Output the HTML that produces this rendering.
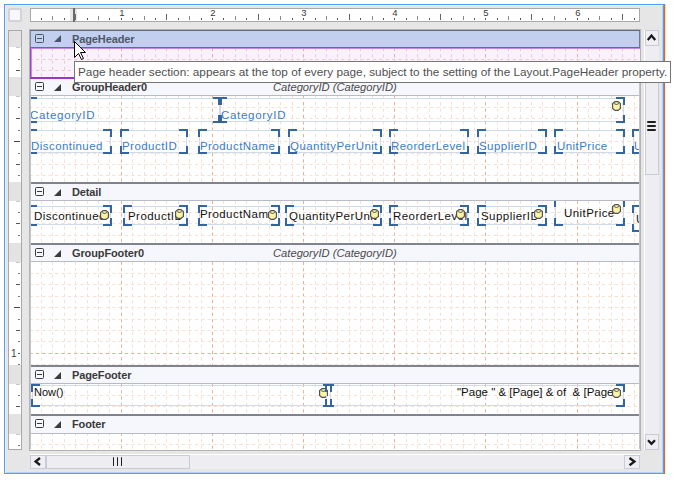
<!DOCTYPE html><html><head><meta charset="utf-8"><style>html,body{margin:0;padding:0;width:673px;height:480px;overflow:hidden;background:#fff;}body{position:relative;font-family:'Liberation Sans', sans-serif;}</style></head><body>
<div style="position:absolute;left:4px;top:4px;width:658px;height:468px;border:1px solid #569ff0;background:#e6e6e6;box-shadow:inset 1px 1px 0 #eeebe8, inset -1px -1px 0 #b4d2f4;"></div>
<div style="position:absolute;left:664px;top:4px;width:1px;height:470px;background:#ff5c0a;"></div>
<div style="position:absolute;left:665px;top:4px;width:1px;height:82px;background:linear-gradient(#ffdcc8,#ffe6d8 60%,#fff);"></div>
<div style="position:absolute;left:8px;top:8px;width:10px;height:10px;border:2px solid #d2d2d7;border-radius:2px;background:#f7f8fd;"></div>
<div style="position:absolute;left:30px;top:8px;width:608px;height:12px;border:1px solid #a9a9a9;background:#fff;"></div>
<div style="position:absolute;left:41px;top:18px;width:1px;height:2px;background:#555;"></div>
<div style="position:absolute;left:52px;top:16px;width:1px;height:4px;background:#8a8a8a;"></div>
<div style="position:absolute;left:64px;top:18px;width:1px;height:2px;background:#555;"></div>
<div style="position:absolute;left:75px;top:14px;width:1px;height:6px;background:#666;"></div>
<div style="position:absolute;left:87px;top:18px;width:1px;height:2px;background:#555;"></div>
<div style="position:absolute;left:98px;top:16px;width:1px;height:4px;background:#8a8a8a;"></div>
<div style="position:absolute;left:109px;top:18px;width:1px;height:2px;background:#555;"></div>
<div style="position:absolute;left:118px;top:8px;font:9.5px 'Liberation Sans', sans-serif;color:#3a3a3a;line-height:1;white-space:pre;width:8px;text-align:center;">1</div>
<div style="position:absolute;left:121px;top:18px;width:1px;height:2px;background:#555;"></div>
<div style="position:absolute;left:132px;top:18px;width:1px;height:2px;background:#555;"></div>
<div style="position:absolute;left:144px;top:16px;width:1px;height:4px;background:#8a8a8a;"></div>
<div style="position:absolute;left:155px;top:18px;width:1px;height:2px;background:#555;"></div>
<div style="position:absolute;left:166px;top:14px;width:1px;height:6px;background:#666;"></div>
<div style="position:absolute;left:178px;top:18px;width:1px;height:2px;background:#555;"></div>
<div style="position:absolute;left:189px;top:16px;width:1px;height:4px;background:#8a8a8a;"></div>
<div style="position:absolute;left:201px;top:18px;width:1px;height:2px;background:#555;"></div>
<div style="position:absolute;left:209px;top:8px;font:9.5px 'Liberation Sans', sans-serif;color:#3a3a3a;line-height:1;white-space:pre;width:8px;text-align:center;">2</div>
<div style="position:absolute;left:212px;top:18px;width:1px;height:2px;background:#555;"></div>
<div style="position:absolute;left:223px;top:18px;width:1px;height:2px;background:#555;"></div>
<div style="position:absolute;left:235px;top:16px;width:1px;height:4px;background:#8a8a8a;"></div>
<div style="position:absolute;left:246px;top:18px;width:1px;height:2px;background:#555;"></div>
<div style="position:absolute;left:258px;top:14px;width:1px;height:6px;background:#666;"></div>
<div style="position:absolute;left:269px;top:18px;width:1px;height:2px;background:#555;"></div>
<div style="position:absolute;left:280px;top:16px;width:1px;height:4px;background:#8a8a8a;"></div>
<div style="position:absolute;left:292px;top:18px;width:1px;height:2px;background:#555;"></div>
<div style="position:absolute;left:300px;top:8px;font:9.5px 'Liberation Sans', sans-serif;color:#3a3a3a;line-height:1;white-space:pre;width:8px;text-align:center;">3</div>
<div style="position:absolute;left:303px;top:18px;width:1px;height:2px;background:#555;"></div>
<div style="position:absolute;left:315px;top:18px;width:1px;height:2px;background:#555;"></div>
<div style="position:absolute;left:326px;top:16px;width:1px;height:4px;background:#8a8a8a;"></div>
<div style="position:absolute;left:337px;top:18px;width:1px;height:2px;background:#555;"></div>
<div style="position:absolute;left:349px;top:14px;width:1px;height:6px;background:#666;"></div>
<div style="position:absolute;left:360px;top:18px;width:1px;height:2px;background:#555;"></div>
<div style="position:absolute;left:372px;top:16px;width:1px;height:4px;background:#8a8a8a;"></div>
<div style="position:absolute;left:383px;top:18px;width:1px;height:2px;background:#555;"></div>
<div style="position:absolute;left:391px;top:8px;font:9.5px 'Liberation Sans', sans-serif;color:#3a3a3a;line-height:1;white-space:pre;width:8px;text-align:center;">4</div>
<div style="position:absolute;left:394px;top:18px;width:1px;height:2px;background:#555;"></div>
<div style="position:absolute;left:406px;top:18px;width:1px;height:2px;background:#555;"></div>
<div style="position:absolute;left:417px;top:16px;width:1px;height:4px;background:#8a8a8a;"></div>
<div style="position:absolute;left:429px;top:18px;width:1px;height:2px;background:#555;"></div>
<div style="position:absolute;left:440px;top:14px;width:1px;height:6px;background:#666;"></div>
<div style="position:absolute;left:451px;top:18px;width:1px;height:2px;background:#555;"></div>
<div style="position:absolute;left:463px;top:16px;width:1px;height:4px;background:#8a8a8a;"></div>
<div style="position:absolute;left:474px;top:18px;width:1px;height:2px;background:#555;"></div>
<div style="position:absolute;left:482px;top:8px;font:9.5px 'Liberation Sans', sans-serif;color:#3a3a3a;line-height:1;white-space:pre;width:8px;text-align:center;">5</div>
<div style="position:absolute;left:485px;top:18px;width:1px;height:2px;background:#555;"></div>
<div style="position:absolute;left:497px;top:18px;width:1px;height:2px;background:#555;"></div>
<div style="position:absolute;left:508px;top:16px;width:1px;height:4px;background:#8a8a8a;"></div>
<div style="position:absolute;left:520px;top:18px;width:1px;height:2px;background:#555;"></div>
<div style="position:absolute;left:531px;top:14px;width:1px;height:6px;background:#666;"></div>
<div style="position:absolute;left:542px;top:18px;width:1px;height:2px;background:#555;"></div>
<div style="position:absolute;left:554px;top:16px;width:1px;height:4px;background:#8a8a8a;"></div>
<div style="position:absolute;left:565px;top:18px;width:1px;height:2px;background:#555;"></div>
<div style="position:absolute;left:574px;top:8px;font:9.5px 'Liberation Sans', sans-serif;color:#3a3a3a;line-height:1;white-space:pre;width:8px;text-align:center;">6</div>
<div style="position:absolute;left:577px;top:18px;width:1px;height:2px;background:#555;"></div>
<div style="position:absolute;left:588px;top:18px;width:1px;height:2px;background:#555;"></div>
<div style="position:absolute;left:599px;top:16px;width:1px;height:4px;background:#8a8a8a;"></div>
<div style="position:absolute;left:611px;top:18px;width:1px;height:2px;background:#555;"></div>
<div style="position:absolute;left:622px;top:14px;width:1px;height:6px;background:#666;"></div>
<div style="position:absolute;left:634px;top:18px;width:1px;height:2px;background:#555;"></div>
<div style="position:absolute;left:70px;top:9px;width:7px;height:12px;background:#e6e6e6;"></div>
<div style="position:absolute;left:73px;top:8px;width:2px;height:14px;background:#6a6a6a;"></div>
<div style="position:absolute;left:75px;top:14px;width:1px;height:6px;background:#707070;"></div>
<div style="position:absolute;left:8px;top:30px;width:12px;height:418px;border:1px solid #a9a9a9;background:#fff;"></div>
<div style="position:absolute;left:9px;top:31px;width:12px;height:16px;background:#e3e3e3;"></div>
<div style="position:absolute;left:16px;top:47px;width:4px;height:1px;background:#c8c8c8;"></div>
<div style="position:absolute;left:18px;top:59px;width:2px;height:1px;background:#777;"></div>
<div style="position:absolute;left:16px;top:70px;width:4px;height:1px;background:#555;"></div>
<div style="position:absolute;left:9px;top:77px;width:12px;height:19px;background:#e3e3e3;"></div>
<div style="position:absolute;left:16px;top:96px;width:4px;height:1px;background:#c8c8c8;"></div>
<div style="position:absolute;left:18px;top:107px;width:2px;height:1px;background:#777;"></div>
<div style="position:absolute;left:16px;top:118px;width:4px;height:1px;background:#555;"></div>
<div style="position:absolute;left:18px;top:130px;width:2px;height:1px;background:#777;"></div>
<div style="position:absolute;left:14px;top:141px;width:6px;height:1px;background:#444;"></div>
<div style="position:absolute;left:18px;top:153px;width:2px;height:1px;background:#777;"></div>
<div style="position:absolute;left:16px;top:164px;width:4px;height:1px;background:#555;"></div>
<div style="position:absolute;left:18px;top:175px;width:2px;height:1px;background:#777;"></div>
<div style="position:absolute;left:9px;top:182px;width:12px;height:19px;background:#e3e3e3;"></div>
<div style="position:absolute;left:16px;top:201px;width:4px;height:1px;background:#c8c8c8;"></div>
<div style="position:absolute;left:18px;top:212px;width:2px;height:1px;background:#777;"></div>
<div style="position:absolute;left:16px;top:223px;width:4px;height:1px;background:#555;"></div>
<div style="position:absolute;left:18px;top:235px;width:2px;height:1px;background:#777;"></div>
<div style="position:absolute;left:9px;top:243px;width:12px;height:19px;background:#e3e3e3;"></div>
<div style="position:absolute;left:16px;top:262px;width:4px;height:1px;background:#c8c8c8;"></div>
<div style="position:absolute;left:18px;top:273px;width:2px;height:1px;background:#777;"></div>
<div style="position:absolute;left:16px;top:284px;width:4px;height:1px;background:#555;"></div>
<div style="position:absolute;left:18px;top:296px;width:2px;height:1px;background:#777;"></div>
<div style="position:absolute;left:14px;top:307px;width:6px;height:1px;background:#444;"></div>
<div style="position:absolute;left:18px;top:319px;width:2px;height:1px;background:#777;"></div>
<div style="position:absolute;left:16px;top:330px;width:4px;height:1px;background:#555;"></div>
<div style="position:absolute;left:18px;top:341px;width:2px;height:1px;background:#777;"></div>
<div style="position:absolute;left:11px;top:349px;font:10px 'Liberation Sans', sans-serif;color:#3a3a3a;line-height:1;white-space:pre;">1</div>
<div style="position:absolute;left:18px;top:353px;width:2px;height:1px;background:#555;"></div>
<div style="position:absolute;left:18px;top:364px;width:2px;height:1px;background:#777;"></div>
<div style="position:absolute;left:9px;top:365px;width:12px;height:19px;background:#e3e3e3;"></div>
<div style="position:absolute;left:16px;top:384px;width:4px;height:1px;background:#c8c8c8;"></div>
<div style="position:absolute;left:18px;top:395px;width:2px;height:1px;background:#777;"></div>
<div style="position:absolute;left:16px;top:406px;width:4px;height:1px;background:#555;"></div>
<div style="position:absolute;left:9px;top:414px;width:12px;height:20px;background:#e3e3e3;"></div>
<div style="position:absolute;left:16px;top:434px;width:4px;height:1px;background:#c8c8c8;"></div>
<div style="position:absolute;left:18px;top:445px;width:2px;height:1px;background:#777;"></div>
<div style="position:absolute;left:29px;top:29px;width:610px;height:420px;border:1px solid #b4b4b4;background:#fff;"></div>
<div style="position:absolute;left:0;top:0;width:673px;height:480px;clip-path:inset(30px 33px 31px 30px);">
<div style="position:absolute;left:30px;top:47px;width:610px;height:32px;background:#f9f1fc;"></div>
<svg style="position:absolute;left:0;top:0" width="673" height="480"><line x1="41.5" y1="48" x2="41.5" y2="79" stroke="#efcbc6" stroke-dasharray="3.2 3.16" stroke-dashoffset="0.2"/><line x1="52.5" y1="48" x2="52.5" y2="79" stroke="#efcbc6" stroke-dasharray="3.2 3.16" stroke-dashoffset="0.2"/><line x1="64.5" y1="48" x2="64.5" y2="79" stroke="#efcbc6" stroke-dasharray="3.2 3.16" stroke-dashoffset="0.2"/><line x1="75.5" y1="48" x2="75.5" y2="79" stroke="#efcbc6" stroke-dasharray="3.2 3.16" stroke-dashoffset="0.2"/><line x1="87.5" y1="48" x2="87.5" y2="79" stroke="#efcbc6" stroke-dasharray="3.2 3.16" stroke-dashoffset="0.2"/><line x1="98.5" y1="48" x2="98.5" y2="79" stroke="#efcbc6" stroke-dasharray="3.2 3.16" stroke-dashoffset="0.2"/><line x1="109.5" y1="48" x2="109.5" y2="79" stroke="#efcbc6" stroke-dasharray="3.2 3.16" stroke-dashoffset="0.2"/><line x1="121.5" y1="48" x2="121.5" y2="79" stroke="#e6b096" stroke-dasharray="3.2 3.16" stroke-dashoffset="0.2"/><line x1="132.5" y1="48" x2="132.5" y2="79" stroke="#efcbc6" stroke-dasharray="3.2 3.16" stroke-dashoffset="0.2"/><line x1="144.5" y1="48" x2="144.5" y2="79" stroke="#efcbc6" stroke-dasharray="3.2 3.16" stroke-dashoffset="0.2"/><line x1="155.5" y1="48" x2="155.5" y2="79" stroke="#efcbc6" stroke-dasharray="3.2 3.16" stroke-dashoffset="0.2"/><line x1="166.5" y1="48" x2="166.5" y2="79" stroke="#efcbc6" stroke-dasharray="3.2 3.16" stroke-dashoffset="0.2"/><line x1="178.5" y1="48" x2="178.5" y2="79" stroke="#efcbc6" stroke-dasharray="3.2 3.16" stroke-dashoffset="0.2"/><line x1="189.5" y1="48" x2="189.5" y2="79" stroke="#efcbc6" stroke-dasharray="3.2 3.16" stroke-dashoffset="0.2"/><line x1="201.5" y1="48" x2="201.5" y2="79" stroke="#efcbc6" stroke-dasharray="3.2 3.16" stroke-dashoffset="0.2"/><line x1="212.5" y1="48" x2="212.5" y2="79" stroke="#e6b096" stroke-dasharray="3.2 3.16" stroke-dashoffset="0.2"/><line x1="223.5" y1="48" x2="223.5" y2="79" stroke="#efcbc6" stroke-dasharray="3.2 3.16" stroke-dashoffset="0.2"/><line x1="235.5" y1="48" x2="235.5" y2="79" stroke="#efcbc6" stroke-dasharray="3.2 3.16" stroke-dashoffset="0.2"/><line x1="246.5" y1="48" x2="246.5" y2="79" stroke="#efcbc6" stroke-dasharray="3.2 3.16" stroke-dashoffset="0.2"/><line x1="258.5" y1="48" x2="258.5" y2="79" stroke="#efcbc6" stroke-dasharray="3.2 3.16" stroke-dashoffset="0.2"/><line x1="269.5" y1="48" x2="269.5" y2="79" stroke="#efcbc6" stroke-dasharray="3.2 3.16" stroke-dashoffset="0.2"/><line x1="280.5" y1="48" x2="280.5" y2="79" stroke="#efcbc6" stroke-dasharray="3.2 3.16" stroke-dashoffset="0.2"/><line x1="292.5" y1="48" x2="292.5" y2="79" stroke="#efcbc6" stroke-dasharray="3.2 3.16" stroke-dashoffset="0.2"/><line x1="303.5" y1="48" x2="303.5" y2="79" stroke="#e6b096" stroke-dasharray="3.2 3.16" stroke-dashoffset="0.2"/><line x1="315.5" y1="48" x2="315.5" y2="79" stroke="#efcbc6" stroke-dasharray="3.2 3.16" stroke-dashoffset="0.2"/><line x1="326.5" y1="48" x2="326.5" y2="79" stroke="#efcbc6" stroke-dasharray="3.2 3.16" stroke-dashoffset="0.2"/><line x1="337.5" y1="48" x2="337.5" y2="79" stroke="#efcbc6" stroke-dasharray="3.2 3.16" stroke-dashoffset="0.2"/><line x1="349.5" y1="48" x2="349.5" y2="79" stroke="#efcbc6" stroke-dasharray="3.2 3.16" stroke-dashoffset="0.2"/><line x1="360.5" y1="48" x2="360.5" y2="79" stroke="#efcbc6" stroke-dasharray="3.2 3.16" stroke-dashoffset="0.2"/><line x1="372.5" y1="48" x2="372.5" y2="79" stroke="#efcbc6" stroke-dasharray="3.2 3.16" stroke-dashoffset="0.2"/><line x1="383.5" y1="48" x2="383.5" y2="79" stroke="#efcbc6" stroke-dasharray="3.2 3.16" stroke-dashoffset="0.2"/><line x1="394.5" y1="48" x2="394.5" y2="79" stroke="#e6b096" stroke-dasharray="3.2 3.16" stroke-dashoffset="0.2"/><line x1="406.5" y1="48" x2="406.5" y2="79" stroke="#efcbc6" stroke-dasharray="3.2 3.16" stroke-dashoffset="0.2"/><line x1="417.5" y1="48" x2="417.5" y2="79" stroke="#efcbc6" stroke-dasharray="3.2 3.16" stroke-dashoffset="0.2"/><line x1="429.5" y1="48" x2="429.5" y2="79" stroke="#efcbc6" stroke-dasharray="3.2 3.16" stroke-dashoffset="0.2"/><line x1="440.5" y1="48" x2="440.5" y2="79" stroke="#efcbc6" stroke-dasharray="3.2 3.16" stroke-dashoffset="0.2"/><line x1="451.5" y1="48" x2="451.5" y2="79" stroke="#efcbc6" stroke-dasharray="3.2 3.16" stroke-dashoffset="0.2"/><line x1="463.5" y1="48" x2="463.5" y2="79" stroke="#efcbc6" stroke-dasharray="3.2 3.16" stroke-dashoffset="0.2"/><line x1="474.5" y1="48" x2="474.5" y2="79" stroke="#efcbc6" stroke-dasharray="3.2 3.16" stroke-dashoffset="0.2"/><line x1="485.5" y1="48" x2="485.5" y2="79" stroke="#e6b096" stroke-dasharray="3.2 3.16" stroke-dashoffset="0.2"/><line x1="497.5" y1="48" x2="497.5" y2="79" stroke="#efcbc6" stroke-dasharray="3.2 3.16" stroke-dashoffset="0.2"/><line x1="508.5" y1="48" x2="508.5" y2="79" stroke="#efcbc6" stroke-dasharray="3.2 3.16" stroke-dashoffset="0.2"/><line x1="520.5" y1="48" x2="520.5" y2="79" stroke="#efcbc6" stroke-dasharray="3.2 3.16" stroke-dashoffset="0.2"/><line x1="531.5" y1="48" x2="531.5" y2="79" stroke="#efcbc6" stroke-dasharray="3.2 3.16" stroke-dashoffset="0.2"/><line x1="542.5" y1="48" x2="542.5" y2="79" stroke="#efcbc6" stroke-dasharray="3.2 3.16" stroke-dashoffset="0.2"/><line x1="554.5" y1="48" x2="554.5" y2="79" stroke="#efcbc6" stroke-dasharray="3.2 3.16" stroke-dashoffset="0.2"/><line x1="565.5" y1="48" x2="565.5" y2="79" stroke="#efcbc6" stroke-dasharray="3.2 3.16" stroke-dashoffset="0.2"/><line x1="577.5" y1="48" x2="577.5" y2="79" stroke="#e6b096" stroke-dasharray="3.2 3.16" stroke-dashoffset="0.2"/><line x1="588.5" y1="48" x2="588.5" y2="79" stroke="#efcbc6" stroke-dasharray="3.2 3.16" stroke-dashoffset="0.2"/><line x1="599.5" y1="48" x2="599.5" y2="79" stroke="#efcbc6" stroke-dasharray="3.2 3.16" stroke-dashoffset="0.2"/><line x1="611.5" y1="48" x2="611.5" y2="79" stroke="#efcbc6" stroke-dasharray="3.2 3.16" stroke-dashoffset="0.2"/><line x1="622.5" y1="48" x2="622.5" y2="79" stroke="#efcbc6" stroke-dasharray="3.2 3.16" stroke-dashoffset="0.2"/><line x1="634.5" y1="48" x2="634.5" y2="79" stroke="#efcbc6" stroke-dasharray="3.2 3.16" stroke-dashoffset="0.2"/><line x1="30" y1="59.5" x2="640" y2="59.5" stroke="#efcbc6" stroke-dasharray="3.2 3.16" stroke-dashoffset="0.5"/><line x1="30" y1="70.5" x2="640" y2="70.5" stroke="#efcbc6" stroke-dasharray="3.2 3.16" stroke-dashoffset="0.5"/></svg>
<div style="position:absolute;left:30px;top:47px;width:619px;height:32px;box-sizing:border-box;border:1px solid #a042cc;border-bottom:2px solid #9a36c4;box-shadow:inset 1px 1px 0 #c68ade;"></div>
<div style="position:absolute;left:30px;top:30px;width:610px;height:1px;background:#5d6a7e;"></div>
<div style="position:absolute;left:30px;top:31px;width:610px;height:16px;background:#c3cfee;"></div>
<div style="position:absolute;left:30px;top:31px;width:1px;height:16px;background:#7d8aa6;"></div>
<div style="position:absolute;left:639px;top:31px;width:1px;height:16px;background:#6f7b96;"></div>
<div style="position:absolute;left:35px;top:34px;width:7px;height:7px;border:1px solid #4a5568;border-radius:1.5px;"></div>
<div style="position:absolute;left:37px;top:38px;width:5px;height:1px;background:#4a5568;"></div>
<svg style="position:absolute;left:54px;top:35px" width="8" height="8"><path d="M7 0 L7 7 L0 7 Z" fill="#4a5568"/></svg>
<div style="position:absolute;left:72px;top:34px;font:bold 11px 'Liberation Sans', sans-serif;color:#4b586b;line-height:1;white-space:pre;letter-spacing:-0.12px;">PageHeader</div>
<svg style="position:absolute;left:0;top:0" width="673" height="480"><line x1="41.5" y1="96" x2="41.5" y2="182" stroke="#f6dfd3" stroke-dasharray="3.2 3.16" stroke-dashoffset="0.2"/><line x1="52.5" y1="96" x2="52.5" y2="182" stroke="#f6dfd3" stroke-dasharray="3.2 3.16" stroke-dashoffset="0.2"/><line x1="64.5" y1="96" x2="64.5" y2="182" stroke="#f6dfd3" stroke-dasharray="3.2 3.16" stroke-dashoffset="0.2"/><line x1="75.5" y1="96" x2="75.5" y2="182" stroke="#f6dfd3" stroke-dasharray="3.2 3.16" stroke-dashoffset="0.2"/><line x1="87.5" y1="96" x2="87.5" y2="182" stroke="#f6dfd3" stroke-dasharray="3.2 3.16" stroke-dashoffset="0.2"/><line x1="98.5" y1="96" x2="98.5" y2="182" stroke="#f6dfd3" stroke-dasharray="3.2 3.16" stroke-dashoffset="0.2"/><line x1="109.5" y1="96" x2="109.5" y2="182" stroke="#f6dfd3" stroke-dasharray="3.2 3.16" stroke-dashoffset="0.2"/><line x1="121.5" y1="96" x2="121.5" y2="182" stroke="#e6b096" stroke-dasharray="3.2 3.16" stroke-dashoffset="0.2"/><line x1="132.5" y1="96" x2="132.5" y2="182" stroke="#f6dfd3" stroke-dasharray="3.2 3.16" stroke-dashoffset="0.2"/><line x1="144.5" y1="96" x2="144.5" y2="182" stroke="#f6dfd3" stroke-dasharray="3.2 3.16" stroke-dashoffset="0.2"/><line x1="155.5" y1="96" x2="155.5" y2="182" stroke="#f6dfd3" stroke-dasharray="3.2 3.16" stroke-dashoffset="0.2"/><line x1="166.5" y1="96" x2="166.5" y2="182" stroke="#f6dfd3" stroke-dasharray="3.2 3.16" stroke-dashoffset="0.2"/><line x1="178.5" y1="96" x2="178.5" y2="182" stroke="#f6dfd3" stroke-dasharray="3.2 3.16" stroke-dashoffset="0.2"/><line x1="189.5" y1="96" x2="189.5" y2="182" stroke="#f6dfd3" stroke-dasharray="3.2 3.16" stroke-dashoffset="0.2"/><line x1="201.5" y1="96" x2="201.5" y2="182" stroke="#f6dfd3" stroke-dasharray="3.2 3.16" stroke-dashoffset="0.2"/><line x1="212.5" y1="96" x2="212.5" y2="182" stroke="#e6b096" stroke-dasharray="3.2 3.16" stroke-dashoffset="0.2"/><line x1="223.5" y1="96" x2="223.5" y2="182" stroke="#f6dfd3" stroke-dasharray="3.2 3.16" stroke-dashoffset="0.2"/><line x1="235.5" y1="96" x2="235.5" y2="182" stroke="#f6dfd3" stroke-dasharray="3.2 3.16" stroke-dashoffset="0.2"/><line x1="246.5" y1="96" x2="246.5" y2="182" stroke="#f6dfd3" stroke-dasharray="3.2 3.16" stroke-dashoffset="0.2"/><line x1="258.5" y1="96" x2="258.5" y2="182" stroke="#f6dfd3" stroke-dasharray="3.2 3.16" stroke-dashoffset="0.2"/><line x1="269.5" y1="96" x2="269.5" y2="182" stroke="#f6dfd3" stroke-dasharray="3.2 3.16" stroke-dashoffset="0.2"/><line x1="280.5" y1="96" x2="280.5" y2="182" stroke="#f6dfd3" stroke-dasharray="3.2 3.16" stroke-dashoffset="0.2"/><line x1="292.5" y1="96" x2="292.5" y2="182" stroke="#f6dfd3" stroke-dasharray="3.2 3.16" stroke-dashoffset="0.2"/><line x1="303.5" y1="96" x2="303.5" y2="182" stroke="#e6b096" stroke-dasharray="3.2 3.16" stroke-dashoffset="0.2"/><line x1="315.5" y1="96" x2="315.5" y2="182" stroke="#f6dfd3" stroke-dasharray="3.2 3.16" stroke-dashoffset="0.2"/><line x1="326.5" y1="96" x2="326.5" y2="182" stroke="#f6dfd3" stroke-dasharray="3.2 3.16" stroke-dashoffset="0.2"/><line x1="337.5" y1="96" x2="337.5" y2="182" stroke="#f6dfd3" stroke-dasharray="3.2 3.16" stroke-dashoffset="0.2"/><line x1="349.5" y1="96" x2="349.5" y2="182" stroke="#f6dfd3" stroke-dasharray="3.2 3.16" stroke-dashoffset="0.2"/><line x1="360.5" y1="96" x2="360.5" y2="182" stroke="#f6dfd3" stroke-dasharray="3.2 3.16" stroke-dashoffset="0.2"/><line x1="372.5" y1="96" x2="372.5" y2="182" stroke="#f6dfd3" stroke-dasharray="3.2 3.16" stroke-dashoffset="0.2"/><line x1="383.5" y1="96" x2="383.5" y2="182" stroke="#f6dfd3" stroke-dasharray="3.2 3.16" stroke-dashoffset="0.2"/><line x1="394.5" y1="96" x2="394.5" y2="182" stroke="#e6b096" stroke-dasharray="3.2 3.16" stroke-dashoffset="0.2"/><line x1="406.5" y1="96" x2="406.5" y2="182" stroke="#f6dfd3" stroke-dasharray="3.2 3.16" stroke-dashoffset="0.2"/><line x1="417.5" y1="96" x2="417.5" y2="182" stroke="#f6dfd3" stroke-dasharray="3.2 3.16" stroke-dashoffset="0.2"/><line x1="429.5" y1="96" x2="429.5" y2="182" stroke="#f6dfd3" stroke-dasharray="3.2 3.16" stroke-dashoffset="0.2"/><line x1="440.5" y1="96" x2="440.5" y2="182" stroke="#f6dfd3" stroke-dasharray="3.2 3.16" stroke-dashoffset="0.2"/><line x1="451.5" y1="96" x2="451.5" y2="182" stroke="#f6dfd3" stroke-dasharray="3.2 3.16" stroke-dashoffset="0.2"/><line x1="463.5" y1="96" x2="463.5" y2="182" stroke="#f6dfd3" stroke-dasharray="3.2 3.16" stroke-dashoffset="0.2"/><line x1="474.5" y1="96" x2="474.5" y2="182" stroke="#f6dfd3" stroke-dasharray="3.2 3.16" stroke-dashoffset="0.2"/><line x1="485.5" y1="96" x2="485.5" y2="182" stroke="#e6b096" stroke-dasharray="3.2 3.16" stroke-dashoffset="0.2"/><line x1="497.5" y1="96" x2="497.5" y2="182" stroke="#f6dfd3" stroke-dasharray="3.2 3.16" stroke-dashoffset="0.2"/><line x1="508.5" y1="96" x2="508.5" y2="182" stroke="#f6dfd3" stroke-dasharray="3.2 3.16" stroke-dashoffset="0.2"/><line x1="520.5" y1="96" x2="520.5" y2="182" stroke="#f6dfd3" stroke-dasharray="3.2 3.16" stroke-dashoffset="0.2"/><line x1="531.5" y1="96" x2="531.5" y2="182" stroke="#f6dfd3" stroke-dasharray="3.2 3.16" stroke-dashoffset="0.2"/><line x1="542.5" y1="96" x2="542.5" y2="182" stroke="#f6dfd3" stroke-dasharray="3.2 3.16" stroke-dashoffset="0.2"/><line x1="554.5" y1="96" x2="554.5" y2="182" stroke="#f6dfd3" stroke-dasharray="3.2 3.16" stroke-dashoffset="0.2"/><line x1="565.5" y1="96" x2="565.5" y2="182" stroke="#f6dfd3" stroke-dasharray="3.2 3.16" stroke-dashoffset="0.2"/><line x1="577.5" y1="96" x2="577.5" y2="182" stroke="#e6b096" stroke-dasharray="3.2 3.16" stroke-dashoffset="0.2"/><line x1="588.5" y1="96" x2="588.5" y2="182" stroke="#f6dfd3" stroke-dasharray="3.2 3.16" stroke-dashoffset="0.2"/><line x1="599.5" y1="96" x2="599.5" y2="182" stroke="#f6dfd3" stroke-dasharray="3.2 3.16" stroke-dashoffset="0.2"/><line x1="611.5" y1="96" x2="611.5" y2="182" stroke="#f6dfd3" stroke-dasharray="3.2 3.16" stroke-dashoffset="0.2"/><line x1="622.5" y1="96" x2="622.5" y2="182" stroke="#f6dfd3" stroke-dasharray="3.2 3.16" stroke-dashoffset="0.2"/><line x1="634.5" y1="96" x2="634.5" y2="182" stroke="#f6dfd3" stroke-dasharray="3.2 3.16" stroke-dashoffset="0.2"/><line x1="30" y1="107.5" x2="640" y2="107.5" stroke="#f6dfd3" stroke-dasharray="3.2 3.16" stroke-dashoffset="0.5"/><line x1="30" y1="118.5" x2="640" y2="118.5" stroke="#f6dfd3" stroke-dasharray="3.2 3.16" stroke-dashoffset="0.5"/><line x1="30" y1="130.5" x2="640" y2="130.5" stroke="#f6dfd3" stroke-dasharray="3.2 3.16" stroke-dashoffset="0.5"/><line x1="30" y1="141.5" x2="640" y2="141.5" stroke="#f6dfd3" stroke-dasharray="3.2 3.16" stroke-dashoffset="0.5"/><line x1="30" y1="153.5" x2="640" y2="153.5" stroke="#f6dfd3" stroke-dasharray="3.2 3.16" stroke-dashoffset="0.5"/><line x1="30" y1="164.5" x2="640" y2="164.5" stroke="#f6dfd3" stroke-dasharray="3.2 3.16" stroke-dashoffset="0.5"/><line x1="30" y1="175.5" x2="640" y2="175.5" stroke="#f6dfd3" stroke-dasharray="3.2 3.16" stroke-dashoffset="0.5"/></svg>
<div style="position:absolute;left:30px;top:79px;width:610px;height:16px;background:#f6f7fc;"></div>
<div style="position:absolute;left:30px;top:95px;width:610px;height:1px;background:#b9bbc2;"></div>
<div style="position:absolute;left:35px;top:82px;width:7px;height:7px;border:1px solid #3c3c3c;border-radius:1.5px;"></div>
<div style="position:absolute;left:37px;top:86px;width:5px;height:1px;background:#3c3c3c;"></div>
<svg style="position:absolute;left:54px;top:84px" width="8" height="8"><path d="M7 0 L7 7 L0 7 Z" fill="#3c3c3c"/></svg>
<div style="position:absolute;left:72px;top:82px;font:bold 11px 'Liberation Sans', sans-serif;color:#3a3a3a;line-height:1;white-space:pre;letter-spacing:-0.12px;">GroupHeader0</div>
<div style="position:absolute;left:273px;top:82px;font:italic 11.2px 'Liberation Sans', sans-serif;color:#4a4a4a;line-height:1;white-space:pre;">CategoryID (CategoryID)</div>
<svg style="position:absolute;left:0;top:0" width="673" height="480"><line x1="41.5" y1="201" x2="41.5" y2="243" stroke="#f6dfd3" stroke-dasharray="3.2 3.16" stroke-dashoffset="0.2"/><line x1="52.5" y1="201" x2="52.5" y2="243" stroke="#f6dfd3" stroke-dasharray="3.2 3.16" stroke-dashoffset="0.2"/><line x1="64.5" y1="201" x2="64.5" y2="243" stroke="#f6dfd3" stroke-dasharray="3.2 3.16" stroke-dashoffset="0.2"/><line x1="75.5" y1="201" x2="75.5" y2="243" stroke="#f6dfd3" stroke-dasharray="3.2 3.16" stroke-dashoffset="0.2"/><line x1="87.5" y1="201" x2="87.5" y2="243" stroke="#f6dfd3" stroke-dasharray="3.2 3.16" stroke-dashoffset="0.2"/><line x1="98.5" y1="201" x2="98.5" y2="243" stroke="#f6dfd3" stroke-dasharray="3.2 3.16" stroke-dashoffset="0.2"/><line x1="109.5" y1="201" x2="109.5" y2="243" stroke="#f6dfd3" stroke-dasharray="3.2 3.16" stroke-dashoffset="0.2"/><line x1="121.5" y1="201" x2="121.5" y2="243" stroke="#e6b096" stroke-dasharray="3.2 3.16" stroke-dashoffset="0.2"/><line x1="132.5" y1="201" x2="132.5" y2="243" stroke="#f6dfd3" stroke-dasharray="3.2 3.16" stroke-dashoffset="0.2"/><line x1="144.5" y1="201" x2="144.5" y2="243" stroke="#f6dfd3" stroke-dasharray="3.2 3.16" stroke-dashoffset="0.2"/><line x1="155.5" y1="201" x2="155.5" y2="243" stroke="#f6dfd3" stroke-dasharray="3.2 3.16" stroke-dashoffset="0.2"/><line x1="166.5" y1="201" x2="166.5" y2="243" stroke="#f6dfd3" stroke-dasharray="3.2 3.16" stroke-dashoffset="0.2"/><line x1="178.5" y1="201" x2="178.5" y2="243" stroke="#f6dfd3" stroke-dasharray="3.2 3.16" stroke-dashoffset="0.2"/><line x1="189.5" y1="201" x2="189.5" y2="243" stroke="#f6dfd3" stroke-dasharray="3.2 3.16" stroke-dashoffset="0.2"/><line x1="201.5" y1="201" x2="201.5" y2="243" stroke="#f6dfd3" stroke-dasharray="3.2 3.16" stroke-dashoffset="0.2"/><line x1="212.5" y1="201" x2="212.5" y2="243" stroke="#e6b096" stroke-dasharray="3.2 3.16" stroke-dashoffset="0.2"/><line x1="223.5" y1="201" x2="223.5" y2="243" stroke="#f6dfd3" stroke-dasharray="3.2 3.16" stroke-dashoffset="0.2"/><line x1="235.5" y1="201" x2="235.5" y2="243" stroke="#f6dfd3" stroke-dasharray="3.2 3.16" stroke-dashoffset="0.2"/><line x1="246.5" y1="201" x2="246.5" y2="243" stroke="#f6dfd3" stroke-dasharray="3.2 3.16" stroke-dashoffset="0.2"/><line x1="258.5" y1="201" x2="258.5" y2="243" stroke="#f6dfd3" stroke-dasharray="3.2 3.16" stroke-dashoffset="0.2"/><line x1="269.5" y1="201" x2="269.5" y2="243" stroke="#f6dfd3" stroke-dasharray="3.2 3.16" stroke-dashoffset="0.2"/><line x1="280.5" y1="201" x2="280.5" y2="243" stroke="#f6dfd3" stroke-dasharray="3.2 3.16" stroke-dashoffset="0.2"/><line x1="292.5" y1="201" x2="292.5" y2="243" stroke="#f6dfd3" stroke-dasharray="3.2 3.16" stroke-dashoffset="0.2"/><line x1="303.5" y1="201" x2="303.5" y2="243" stroke="#e6b096" stroke-dasharray="3.2 3.16" stroke-dashoffset="0.2"/><line x1="315.5" y1="201" x2="315.5" y2="243" stroke="#f6dfd3" stroke-dasharray="3.2 3.16" stroke-dashoffset="0.2"/><line x1="326.5" y1="201" x2="326.5" y2="243" stroke="#f6dfd3" stroke-dasharray="3.2 3.16" stroke-dashoffset="0.2"/><line x1="337.5" y1="201" x2="337.5" y2="243" stroke="#f6dfd3" stroke-dasharray="3.2 3.16" stroke-dashoffset="0.2"/><line x1="349.5" y1="201" x2="349.5" y2="243" stroke="#f6dfd3" stroke-dasharray="3.2 3.16" stroke-dashoffset="0.2"/><line x1="360.5" y1="201" x2="360.5" y2="243" stroke="#f6dfd3" stroke-dasharray="3.2 3.16" stroke-dashoffset="0.2"/><line x1="372.5" y1="201" x2="372.5" y2="243" stroke="#f6dfd3" stroke-dasharray="3.2 3.16" stroke-dashoffset="0.2"/><line x1="383.5" y1="201" x2="383.5" y2="243" stroke="#f6dfd3" stroke-dasharray="3.2 3.16" stroke-dashoffset="0.2"/><line x1="394.5" y1="201" x2="394.5" y2="243" stroke="#e6b096" stroke-dasharray="3.2 3.16" stroke-dashoffset="0.2"/><line x1="406.5" y1="201" x2="406.5" y2="243" stroke="#f6dfd3" stroke-dasharray="3.2 3.16" stroke-dashoffset="0.2"/><line x1="417.5" y1="201" x2="417.5" y2="243" stroke="#f6dfd3" stroke-dasharray="3.2 3.16" stroke-dashoffset="0.2"/><line x1="429.5" y1="201" x2="429.5" y2="243" stroke="#f6dfd3" stroke-dasharray="3.2 3.16" stroke-dashoffset="0.2"/><line x1="440.5" y1="201" x2="440.5" y2="243" stroke="#f6dfd3" stroke-dasharray="3.2 3.16" stroke-dashoffset="0.2"/><line x1="451.5" y1="201" x2="451.5" y2="243" stroke="#f6dfd3" stroke-dasharray="3.2 3.16" stroke-dashoffset="0.2"/><line x1="463.5" y1="201" x2="463.5" y2="243" stroke="#f6dfd3" stroke-dasharray="3.2 3.16" stroke-dashoffset="0.2"/><line x1="474.5" y1="201" x2="474.5" y2="243" stroke="#f6dfd3" stroke-dasharray="3.2 3.16" stroke-dashoffset="0.2"/><line x1="485.5" y1="201" x2="485.5" y2="243" stroke="#e6b096" stroke-dasharray="3.2 3.16" stroke-dashoffset="0.2"/><line x1="497.5" y1="201" x2="497.5" y2="243" stroke="#f6dfd3" stroke-dasharray="3.2 3.16" stroke-dashoffset="0.2"/><line x1="508.5" y1="201" x2="508.5" y2="243" stroke="#f6dfd3" stroke-dasharray="3.2 3.16" stroke-dashoffset="0.2"/><line x1="520.5" y1="201" x2="520.5" y2="243" stroke="#f6dfd3" stroke-dasharray="3.2 3.16" stroke-dashoffset="0.2"/><line x1="531.5" y1="201" x2="531.5" y2="243" stroke="#f6dfd3" stroke-dasharray="3.2 3.16" stroke-dashoffset="0.2"/><line x1="542.5" y1="201" x2="542.5" y2="243" stroke="#f6dfd3" stroke-dasharray="3.2 3.16" stroke-dashoffset="0.2"/><line x1="554.5" y1="201" x2="554.5" y2="243" stroke="#f6dfd3" stroke-dasharray="3.2 3.16" stroke-dashoffset="0.2"/><line x1="565.5" y1="201" x2="565.5" y2="243" stroke="#f6dfd3" stroke-dasharray="3.2 3.16" stroke-dashoffset="0.2"/><line x1="577.5" y1="201" x2="577.5" y2="243" stroke="#e6b096" stroke-dasharray="3.2 3.16" stroke-dashoffset="0.2"/><line x1="588.5" y1="201" x2="588.5" y2="243" stroke="#f6dfd3" stroke-dasharray="3.2 3.16" stroke-dashoffset="0.2"/><line x1="599.5" y1="201" x2="599.5" y2="243" stroke="#f6dfd3" stroke-dasharray="3.2 3.16" stroke-dashoffset="0.2"/><line x1="611.5" y1="201" x2="611.5" y2="243" stroke="#f6dfd3" stroke-dasharray="3.2 3.16" stroke-dashoffset="0.2"/><line x1="622.5" y1="201" x2="622.5" y2="243" stroke="#f6dfd3" stroke-dasharray="3.2 3.16" stroke-dashoffset="0.2"/><line x1="634.5" y1="201" x2="634.5" y2="243" stroke="#f6dfd3" stroke-dasharray="3.2 3.16" stroke-dashoffset="0.2"/><line x1="30" y1="212.5" x2="640" y2="212.5" stroke="#f6dfd3" stroke-dasharray="3.2 3.16" stroke-dashoffset="0.5"/><line x1="30" y1="223.5" x2="640" y2="223.5" stroke="#f6dfd3" stroke-dasharray="3.2 3.16" stroke-dashoffset="0.5"/><line x1="30" y1="235.5" x2="640" y2="235.5" stroke="#f6dfd3" stroke-dasharray="3.2 3.16" stroke-dashoffset="0.5"/></svg>
<div style="position:absolute;left:30px;top:182px;width:610px;height:2px;background:#80838e;"></div>
<div style="position:absolute;left:30px;top:184px;width:610px;height:16px;background:#f6f7fc;"></div>
<div style="position:absolute;left:30px;top:200px;width:610px;height:1px;background:#b9bbc2;"></div>
<div style="position:absolute;left:35px;top:187px;width:7px;height:7px;border:1px solid #3c3c3c;border-radius:1.5px;"></div>
<div style="position:absolute;left:37px;top:191px;width:5px;height:1px;background:#3c3c3c;"></div>
<svg style="position:absolute;left:54px;top:189px" width="8" height="8"><path d="M7 0 L7 7 L0 7 Z" fill="#3c3c3c"/></svg>
<div style="position:absolute;left:72px;top:187px;font:bold 11px 'Liberation Sans', sans-serif;color:#3a3a3a;line-height:1;white-space:pre;letter-spacing:-0.12px;">Detail</div>
<svg style="position:absolute;left:0;top:0" width="673" height="480"><line x1="41.5" y1="262" x2="41.5" y2="365" stroke="#f6dfd3" stroke-dasharray="3.2 3.16" stroke-dashoffset="0.2"/><line x1="52.5" y1="262" x2="52.5" y2="365" stroke="#f6dfd3" stroke-dasharray="3.2 3.16" stroke-dashoffset="0.2"/><line x1="64.5" y1="262" x2="64.5" y2="365" stroke="#f6dfd3" stroke-dasharray="3.2 3.16" stroke-dashoffset="0.2"/><line x1="75.5" y1="262" x2="75.5" y2="365" stroke="#f6dfd3" stroke-dasharray="3.2 3.16" stroke-dashoffset="0.2"/><line x1="87.5" y1="262" x2="87.5" y2="365" stroke="#f6dfd3" stroke-dasharray="3.2 3.16" stroke-dashoffset="0.2"/><line x1="98.5" y1="262" x2="98.5" y2="365" stroke="#f6dfd3" stroke-dasharray="3.2 3.16" stroke-dashoffset="0.2"/><line x1="109.5" y1="262" x2="109.5" y2="365" stroke="#f6dfd3" stroke-dasharray="3.2 3.16" stroke-dashoffset="0.2"/><line x1="121.5" y1="262" x2="121.5" y2="365" stroke="#e6b096" stroke-dasharray="3.2 3.16" stroke-dashoffset="0.2"/><line x1="132.5" y1="262" x2="132.5" y2="365" stroke="#f6dfd3" stroke-dasharray="3.2 3.16" stroke-dashoffset="0.2"/><line x1="144.5" y1="262" x2="144.5" y2="365" stroke="#f6dfd3" stroke-dasharray="3.2 3.16" stroke-dashoffset="0.2"/><line x1="155.5" y1="262" x2="155.5" y2="365" stroke="#f6dfd3" stroke-dasharray="3.2 3.16" stroke-dashoffset="0.2"/><line x1="166.5" y1="262" x2="166.5" y2="365" stroke="#f6dfd3" stroke-dasharray="3.2 3.16" stroke-dashoffset="0.2"/><line x1="178.5" y1="262" x2="178.5" y2="365" stroke="#f6dfd3" stroke-dasharray="3.2 3.16" stroke-dashoffset="0.2"/><line x1="189.5" y1="262" x2="189.5" y2="365" stroke="#f6dfd3" stroke-dasharray="3.2 3.16" stroke-dashoffset="0.2"/><line x1="201.5" y1="262" x2="201.5" y2="365" stroke="#f6dfd3" stroke-dasharray="3.2 3.16" stroke-dashoffset="0.2"/><line x1="212.5" y1="262" x2="212.5" y2="365" stroke="#e6b096" stroke-dasharray="3.2 3.16" stroke-dashoffset="0.2"/><line x1="223.5" y1="262" x2="223.5" y2="365" stroke="#f6dfd3" stroke-dasharray="3.2 3.16" stroke-dashoffset="0.2"/><line x1="235.5" y1="262" x2="235.5" y2="365" stroke="#f6dfd3" stroke-dasharray="3.2 3.16" stroke-dashoffset="0.2"/><line x1="246.5" y1="262" x2="246.5" y2="365" stroke="#f6dfd3" stroke-dasharray="3.2 3.16" stroke-dashoffset="0.2"/><line x1="258.5" y1="262" x2="258.5" y2="365" stroke="#f6dfd3" stroke-dasharray="3.2 3.16" stroke-dashoffset="0.2"/><line x1="269.5" y1="262" x2="269.5" y2="365" stroke="#f6dfd3" stroke-dasharray="3.2 3.16" stroke-dashoffset="0.2"/><line x1="280.5" y1="262" x2="280.5" y2="365" stroke="#f6dfd3" stroke-dasharray="3.2 3.16" stroke-dashoffset="0.2"/><line x1="292.5" y1="262" x2="292.5" y2="365" stroke="#f6dfd3" stroke-dasharray="3.2 3.16" stroke-dashoffset="0.2"/><line x1="303.5" y1="262" x2="303.5" y2="365" stroke="#e6b096" stroke-dasharray="3.2 3.16" stroke-dashoffset="0.2"/><line x1="315.5" y1="262" x2="315.5" y2="365" stroke="#f6dfd3" stroke-dasharray="3.2 3.16" stroke-dashoffset="0.2"/><line x1="326.5" y1="262" x2="326.5" y2="365" stroke="#f6dfd3" stroke-dasharray="3.2 3.16" stroke-dashoffset="0.2"/><line x1="337.5" y1="262" x2="337.5" y2="365" stroke="#f6dfd3" stroke-dasharray="3.2 3.16" stroke-dashoffset="0.2"/><line x1="349.5" y1="262" x2="349.5" y2="365" stroke="#f6dfd3" stroke-dasharray="3.2 3.16" stroke-dashoffset="0.2"/><line x1="360.5" y1="262" x2="360.5" y2="365" stroke="#f6dfd3" stroke-dasharray="3.2 3.16" stroke-dashoffset="0.2"/><line x1="372.5" y1="262" x2="372.5" y2="365" stroke="#f6dfd3" stroke-dasharray="3.2 3.16" stroke-dashoffset="0.2"/><line x1="383.5" y1="262" x2="383.5" y2="365" stroke="#f6dfd3" stroke-dasharray="3.2 3.16" stroke-dashoffset="0.2"/><line x1="394.5" y1="262" x2="394.5" y2="365" stroke="#e6b096" stroke-dasharray="3.2 3.16" stroke-dashoffset="0.2"/><line x1="406.5" y1="262" x2="406.5" y2="365" stroke="#f6dfd3" stroke-dasharray="3.2 3.16" stroke-dashoffset="0.2"/><line x1="417.5" y1="262" x2="417.5" y2="365" stroke="#f6dfd3" stroke-dasharray="3.2 3.16" stroke-dashoffset="0.2"/><line x1="429.5" y1="262" x2="429.5" y2="365" stroke="#f6dfd3" stroke-dasharray="3.2 3.16" stroke-dashoffset="0.2"/><line x1="440.5" y1="262" x2="440.5" y2="365" stroke="#f6dfd3" stroke-dasharray="3.2 3.16" stroke-dashoffset="0.2"/><line x1="451.5" y1="262" x2="451.5" y2="365" stroke="#f6dfd3" stroke-dasharray="3.2 3.16" stroke-dashoffset="0.2"/><line x1="463.5" y1="262" x2="463.5" y2="365" stroke="#f6dfd3" stroke-dasharray="3.2 3.16" stroke-dashoffset="0.2"/><line x1="474.5" y1="262" x2="474.5" y2="365" stroke="#f6dfd3" stroke-dasharray="3.2 3.16" stroke-dashoffset="0.2"/><line x1="485.5" y1="262" x2="485.5" y2="365" stroke="#e6b096" stroke-dasharray="3.2 3.16" stroke-dashoffset="0.2"/><line x1="497.5" y1="262" x2="497.5" y2="365" stroke="#f6dfd3" stroke-dasharray="3.2 3.16" stroke-dashoffset="0.2"/><line x1="508.5" y1="262" x2="508.5" y2="365" stroke="#f6dfd3" stroke-dasharray="3.2 3.16" stroke-dashoffset="0.2"/><line x1="520.5" y1="262" x2="520.5" y2="365" stroke="#f6dfd3" stroke-dasharray="3.2 3.16" stroke-dashoffset="0.2"/><line x1="531.5" y1="262" x2="531.5" y2="365" stroke="#f6dfd3" stroke-dasharray="3.2 3.16" stroke-dashoffset="0.2"/><line x1="542.5" y1="262" x2="542.5" y2="365" stroke="#f6dfd3" stroke-dasharray="3.2 3.16" stroke-dashoffset="0.2"/><line x1="554.5" y1="262" x2="554.5" y2="365" stroke="#f6dfd3" stroke-dasharray="3.2 3.16" stroke-dashoffset="0.2"/><line x1="565.5" y1="262" x2="565.5" y2="365" stroke="#f6dfd3" stroke-dasharray="3.2 3.16" stroke-dashoffset="0.2"/><line x1="577.5" y1="262" x2="577.5" y2="365" stroke="#e6b096" stroke-dasharray="3.2 3.16" stroke-dashoffset="0.2"/><line x1="588.5" y1="262" x2="588.5" y2="365" stroke="#f6dfd3" stroke-dasharray="3.2 3.16" stroke-dashoffset="0.2"/><line x1="599.5" y1="262" x2="599.5" y2="365" stroke="#f6dfd3" stroke-dasharray="3.2 3.16" stroke-dashoffset="0.2"/><line x1="611.5" y1="262" x2="611.5" y2="365" stroke="#f6dfd3" stroke-dasharray="3.2 3.16" stroke-dashoffset="0.2"/><line x1="622.5" y1="262" x2="622.5" y2="365" stroke="#f6dfd3" stroke-dasharray="3.2 3.16" stroke-dashoffset="0.2"/><line x1="634.5" y1="262" x2="634.5" y2="365" stroke="#f6dfd3" stroke-dasharray="3.2 3.16" stroke-dashoffset="0.2"/><line x1="30" y1="273.5" x2="640" y2="273.5" stroke="#f6dfd3" stroke-dasharray="3.2 3.16" stroke-dashoffset="0.5"/><line x1="30" y1="284.5" x2="640" y2="284.5" stroke="#f6dfd3" stroke-dasharray="3.2 3.16" stroke-dashoffset="0.5"/><line x1="30" y1="296.5" x2="640" y2="296.5" stroke="#f6dfd3" stroke-dasharray="3.2 3.16" stroke-dashoffset="0.5"/><line x1="30" y1="307.5" x2="640" y2="307.5" stroke="#f6dfd3" stroke-dasharray="3.2 3.16" stroke-dashoffset="0.5"/><line x1="30" y1="319.5" x2="640" y2="319.5" stroke="#f6dfd3" stroke-dasharray="3.2 3.16" stroke-dashoffset="0.5"/><line x1="30" y1="330.5" x2="640" y2="330.5" stroke="#f6dfd3" stroke-dasharray="3.2 3.16" stroke-dashoffset="0.5"/><line x1="30" y1="341.5" x2="640" y2="341.5" stroke="#f6dfd3" stroke-dasharray="3.2 3.16" stroke-dashoffset="0.5"/><line x1="30" y1="353.5" x2="640" y2="353.5" stroke="#e6b096" stroke-dasharray="3.2 3.16" stroke-dashoffset="0.5"/><line x1="30" y1="364.5" x2="640" y2="364.5" stroke="#f6dfd3" stroke-dasharray="3.2 3.16" stroke-dashoffset="0.5"/></svg>
<div style="position:absolute;left:30px;top:243px;width:610px;height:2px;background:#80838e;"></div>
<div style="position:absolute;left:30px;top:245px;width:610px;height:16px;background:#f6f7fc;"></div>
<div style="position:absolute;left:30px;top:261px;width:610px;height:1px;background:#b9bbc2;"></div>
<div style="position:absolute;left:35px;top:248px;width:7px;height:7px;border:1px solid #3c3c3c;border-radius:1.5px;"></div>
<div style="position:absolute;left:37px;top:252px;width:5px;height:1px;background:#3c3c3c;"></div>
<svg style="position:absolute;left:54px;top:250px" width="8" height="8"><path d="M7 0 L7 7 L0 7 Z" fill="#3c3c3c"/></svg>
<div style="position:absolute;left:72px;top:248px;font:bold 11px 'Liberation Sans', sans-serif;color:#3a3a3a;line-height:1;white-space:pre;letter-spacing:-0.12px;">GroupFooter0</div>
<div style="position:absolute;left:273px;top:248px;font:italic 11.2px 'Liberation Sans', sans-serif;color:#4a4a4a;line-height:1;white-space:pre;">CategoryID (CategoryID)</div>
<svg style="position:absolute;left:0;top:0" width="673" height="480"><line x1="41.5" y1="384" x2="41.5" y2="414" stroke="#f6dfd3" stroke-dasharray="3.2 3.16" stroke-dashoffset="0.2"/><line x1="52.5" y1="384" x2="52.5" y2="414" stroke="#f6dfd3" stroke-dasharray="3.2 3.16" stroke-dashoffset="0.2"/><line x1="64.5" y1="384" x2="64.5" y2="414" stroke="#f6dfd3" stroke-dasharray="3.2 3.16" stroke-dashoffset="0.2"/><line x1="75.5" y1="384" x2="75.5" y2="414" stroke="#f6dfd3" stroke-dasharray="3.2 3.16" stroke-dashoffset="0.2"/><line x1="87.5" y1="384" x2="87.5" y2="414" stroke="#f6dfd3" stroke-dasharray="3.2 3.16" stroke-dashoffset="0.2"/><line x1="98.5" y1="384" x2="98.5" y2="414" stroke="#f6dfd3" stroke-dasharray="3.2 3.16" stroke-dashoffset="0.2"/><line x1="109.5" y1="384" x2="109.5" y2="414" stroke="#f6dfd3" stroke-dasharray="3.2 3.16" stroke-dashoffset="0.2"/><line x1="121.5" y1="384" x2="121.5" y2="414" stroke="#e6b096" stroke-dasharray="3.2 3.16" stroke-dashoffset="0.2"/><line x1="132.5" y1="384" x2="132.5" y2="414" stroke="#f6dfd3" stroke-dasharray="3.2 3.16" stroke-dashoffset="0.2"/><line x1="144.5" y1="384" x2="144.5" y2="414" stroke="#f6dfd3" stroke-dasharray="3.2 3.16" stroke-dashoffset="0.2"/><line x1="155.5" y1="384" x2="155.5" y2="414" stroke="#f6dfd3" stroke-dasharray="3.2 3.16" stroke-dashoffset="0.2"/><line x1="166.5" y1="384" x2="166.5" y2="414" stroke="#f6dfd3" stroke-dasharray="3.2 3.16" stroke-dashoffset="0.2"/><line x1="178.5" y1="384" x2="178.5" y2="414" stroke="#f6dfd3" stroke-dasharray="3.2 3.16" stroke-dashoffset="0.2"/><line x1="189.5" y1="384" x2="189.5" y2="414" stroke="#f6dfd3" stroke-dasharray="3.2 3.16" stroke-dashoffset="0.2"/><line x1="201.5" y1="384" x2="201.5" y2="414" stroke="#f6dfd3" stroke-dasharray="3.2 3.16" stroke-dashoffset="0.2"/><line x1="212.5" y1="384" x2="212.5" y2="414" stroke="#e6b096" stroke-dasharray="3.2 3.16" stroke-dashoffset="0.2"/><line x1="223.5" y1="384" x2="223.5" y2="414" stroke="#f6dfd3" stroke-dasharray="3.2 3.16" stroke-dashoffset="0.2"/><line x1="235.5" y1="384" x2="235.5" y2="414" stroke="#f6dfd3" stroke-dasharray="3.2 3.16" stroke-dashoffset="0.2"/><line x1="246.5" y1="384" x2="246.5" y2="414" stroke="#f6dfd3" stroke-dasharray="3.2 3.16" stroke-dashoffset="0.2"/><line x1="258.5" y1="384" x2="258.5" y2="414" stroke="#f6dfd3" stroke-dasharray="3.2 3.16" stroke-dashoffset="0.2"/><line x1="269.5" y1="384" x2="269.5" y2="414" stroke="#f6dfd3" stroke-dasharray="3.2 3.16" stroke-dashoffset="0.2"/><line x1="280.5" y1="384" x2="280.5" y2="414" stroke="#f6dfd3" stroke-dasharray="3.2 3.16" stroke-dashoffset="0.2"/><line x1="292.5" y1="384" x2="292.5" y2="414" stroke="#f6dfd3" stroke-dasharray="3.2 3.16" stroke-dashoffset="0.2"/><line x1="303.5" y1="384" x2="303.5" y2="414" stroke="#e6b096" stroke-dasharray="3.2 3.16" stroke-dashoffset="0.2"/><line x1="315.5" y1="384" x2="315.5" y2="414" stroke="#f6dfd3" stroke-dasharray="3.2 3.16" stroke-dashoffset="0.2"/><line x1="326.5" y1="384" x2="326.5" y2="414" stroke="#f6dfd3" stroke-dasharray="3.2 3.16" stroke-dashoffset="0.2"/><line x1="337.5" y1="384" x2="337.5" y2="414" stroke="#f6dfd3" stroke-dasharray="3.2 3.16" stroke-dashoffset="0.2"/><line x1="349.5" y1="384" x2="349.5" y2="414" stroke="#f6dfd3" stroke-dasharray="3.2 3.16" stroke-dashoffset="0.2"/><line x1="360.5" y1="384" x2="360.5" y2="414" stroke="#f6dfd3" stroke-dasharray="3.2 3.16" stroke-dashoffset="0.2"/><line x1="372.5" y1="384" x2="372.5" y2="414" stroke="#f6dfd3" stroke-dasharray="3.2 3.16" stroke-dashoffset="0.2"/><line x1="383.5" y1="384" x2="383.5" y2="414" stroke="#f6dfd3" stroke-dasharray="3.2 3.16" stroke-dashoffset="0.2"/><line x1="394.5" y1="384" x2="394.5" y2="414" stroke="#e6b096" stroke-dasharray="3.2 3.16" stroke-dashoffset="0.2"/><line x1="406.5" y1="384" x2="406.5" y2="414" stroke="#f6dfd3" stroke-dasharray="3.2 3.16" stroke-dashoffset="0.2"/><line x1="417.5" y1="384" x2="417.5" y2="414" stroke="#f6dfd3" stroke-dasharray="3.2 3.16" stroke-dashoffset="0.2"/><line x1="429.5" y1="384" x2="429.5" y2="414" stroke="#f6dfd3" stroke-dasharray="3.2 3.16" stroke-dashoffset="0.2"/><line x1="440.5" y1="384" x2="440.5" y2="414" stroke="#f6dfd3" stroke-dasharray="3.2 3.16" stroke-dashoffset="0.2"/><line x1="451.5" y1="384" x2="451.5" y2="414" stroke="#f6dfd3" stroke-dasharray="3.2 3.16" stroke-dashoffset="0.2"/><line x1="463.5" y1="384" x2="463.5" y2="414" stroke="#f6dfd3" stroke-dasharray="3.2 3.16" stroke-dashoffset="0.2"/><line x1="474.5" y1="384" x2="474.5" y2="414" stroke="#f6dfd3" stroke-dasharray="3.2 3.16" stroke-dashoffset="0.2"/><line x1="485.5" y1="384" x2="485.5" y2="414" stroke="#e6b096" stroke-dasharray="3.2 3.16" stroke-dashoffset="0.2"/><line x1="497.5" y1="384" x2="497.5" y2="414" stroke="#f6dfd3" stroke-dasharray="3.2 3.16" stroke-dashoffset="0.2"/><line x1="508.5" y1="384" x2="508.5" y2="414" stroke="#f6dfd3" stroke-dasharray="3.2 3.16" stroke-dashoffset="0.2"/><line x1="520.5" y1="384" x2="520.5" y2="414" stroke="#f6dfd3" stroke-dasharray="3.2 3.16" stroke-dashoffset="0.2"/><line x1="531.5" y1="384" x2="531.5" y2="414" stroke="#f6dfd3" stroke-dasharray="3.2 3.16" stroke-dashoffset="0.2"/><line x1="542.5" y1="384" x2="542.5" y2="414" stroke="#f6dfd3" stroke-dasharray="3.2 3.16" stroke-dashoffset="0.2"/><line x1="554.5" y1="384" x2="554.5" y2="414" stroke="#f6dfd3" stroke-dasharray="3.2 3.16" stroke-dashoffset="0.2"/><line x1="565.5" y1="384" x2="565.5" y2="414" stroke="#f6dfd3" stroke-dasharray="3.2 3.16" stroke-dashoffset="0.2"/><line x1="577.5" y1="384" x2="577.5" y2="414" stroke="#e6b096" stroke-dasharray="3.2 3.16" stroke-dashoffset="0.2"/><line x1="588.5" y1="384" x2="588.5" y2="414" stroke="#f6dfd3" stroke-dasharray="3.2 3.16" stroke-dashoffset="0.2"/><line x1="599.5" y1="384" x2="599.5" y2="414" stroke="#f6dfd3" stroke-dasharray="3.2 3.16" stroke-dashoffset="0.2"/><line x1="611.5" y1="384" x2="611.5" y2="414" stroke="#f6dfd3" stroke-dasharray="3.2 3.16" stroke-dashoffset="0.2"/><line x1="622.5" y1="384" x2="622.5" y2="414" stroke="#f6dfd3" stroke-dasharray="3.2 3.16" stroke-dashoffset="0.2"/><line x1="634.5" y1="384" x2="634.5" y2="414" stroke="#f6dfd3" stroke-dasharray="3.2 3.16" stroke-dashoffset="0.2"/><line x1="30" y1="395.5" x2="640" y2="395.5" stroke="#f6dfd3" stroke-dasharray="3.2 3.16" stroke-dashoffset="0.5"/><line x1="30" y1="406.5" x2="640" y2="406.5" stroke="#f6dfd3" stroke-dasharray="3.2 3.16" stroke-dashoffset="0.5"/></svg>
<div style="position:absolute;left:30px;top:365px;width:610px;height:2px;background:#80838e;"></div>
<div style="position:absolute;left:30px;top:367px;width:610px;height:16px;background:#f6f7fc;"></div>
<div style="position:absolute;left:30px;top:383px;width:610px;height:1px;background:#b9bbc2;"></div>
<div style="position:absolute;left:35px;top:370px;width:7px;height:7px;border:1px solid #3c3c3c;border-radius:1.5px;"></div>
<div style="position:absolute;left:37px;top:374px;width:5px;height:1px;background:#3c3c3c;"></div>
<svg style="position:absolute;left:54px;top:372px" width="8" height="8"><path d="M7 0 L7 7 L0 7 Z" fill="#3c3c3c"/></svg>
<div style="position:absolute;left:72px;top:370px;font:bold 11px 'Liberation Sans', sans-serif;color:#3a3a3a;line-height:1;white-space:pre;letter-spacing:-0.12px;">PageFooter</div>
<svg style="position:absolute;left:0;top:0" width="673" height="480"><line x1="41.5" y1="433" x2="41.5" y2="449" stroke="#f6dfd3" stroke-dasharray="3.2 3.16" stroke-dashoffset="0.2"/><line x1="52.5" y1="433" x2="52.5" y2="449" stroke="#f6dfd3" stroke-dasharray="3.2 3.16" stroke-dashoffset="0.2"/><line x1="64.5" y1="433" x2="64.5" y2="449" stroke="#f6dfd3" stroke-dasharray="3.2 3.16" stroke-dashoffset="0.2"/><line x1="75.5" y1="433" x2="75.5" y2="449" stroke="#f6dfd3" stroke-dasharray="3.2 3.16" stroke-dashoffset="0.2"/><line x1="87.5" y1="433" x2="87.5" y2="449" stroke="#f6dfd3" stroke-dasharray="3.2 3.16" stroke-dashoffset="0.2"/><line x1="98.5" y1="433" x2="98.5" y2="449" stroke="#f6dfd3" stroke-dasharray="3.2 3.16" stroke-dashoffset="0.2"/><line x1="109.5" y1="433" x2="109.5" y2="449" stroke="#f6dfd3" stroke-dasharray="3.2 3.16" stroke-dashoffset="0.2"/><line x1="121.5" y1="433" x2="121.5" y2="449" stroke="#e6b096" stroke-dasharray="3.2 3.16" stroke-dashoffset="0.2"/><line x1="132.5" y1="433" x2="132.5" y2="449" stroke="#f6dfd3" stroke-dasharray="3.2 3.16" stroke-dashoffset="0.2"/><line x1="144.5" y1="433" x2="144.5" y2="449" stroke="#f6dfd3" stroke-dasharray="3.2 3.16" stroke-dashoffset="0.2"/><line x1="155.5" y1="433" x2="155.5" y2="449" stroke="#f6dfd3" stroke-dasharray="3.2 3.16" stroke-dashoffset="0.2"/><line x1="166.5" y1="433" x2="166.5" y2="449" stroke="#f6dfd3" stroke-dasharray="3.2 3.16" stroke-dashoffset="0.2"/><line x1="178.5" y1="433" x2="178.5" y2="449" stroke="#f6dfd3" stroke-dasharray="3.2 3.16" stroke-dashoffset="0.2"/><line x1="189.5" y1="433" x2="189.5" y2="449" stroke="#f6dfd3" stroke-dasharray="3.2 3.16" stroke-dashoffset="0.2"/><line x1="201.5" y1="433" x2="201.5" y2="449" stroke="#f6dfd3" stroke-dasharray="3.2 3.16" stroke-dashoffset="0.2"/><line x1="212.5" y1="433" x2="212.5" y2="449" stroke="#e6b096" stroke-dasharray="3.2 3.16" stroke-dashoffset="0.2"/><line x1="223.5" y1="433" x2="223.5" y2="449" stroke="#f6dfd3" stroke-dasharray="3.2 3.16" stroke-dashoffset="0.2"/><line x1="235.5" y1="433" x2="235.5" y2="449" stroke="#f6dfd3" stroke-dasharray="3.2 3.16" stroke-dashoffset="0.2"/><line x1="246.5" y1="433" x2="246.5" y2="449" stroke="#f6dfd3" stroke-dasharray="3.2 3.16" stroke-dashoffset="0.2"/><line x1="258.5" y1="433" x2="258.5" y2="449" stroke="#f6dfd3" stroke-dasharray="3.2 3.16" stroke-dashoffset="0.2"/><line x1="269.5" y1="433" x2="269.5" y2="449" stroke="#f6dfd3" stroke-dasharray="3.2 3.16" stroke-dashoffset="0.2"/><line x1="280.5" y1="433" x2="280.5" y2="449" stroke="#f6dfd3" stroke-dasharray="3.2 3.16" stroke-dashoffset="0.2"/><line x1="292.5" y1="433" x2="292.5" y2="449" stroke="#f6dfd3" stroke-dasharray="3.2 3.16" stroke-dashoffset="0.2"/><line x1="303.5" y1="433" x2="303.5" y2="449" stroke="#e6b096" stroke-dasharray="3.2 3.16" stroke-dashoffset="0.2"/><line x1="315.5" y1="433" x2="315.5" y2="449" stroke="#f6dfd3" stroke-dasharray="3.2 3.16" stroke-dashoffset="0.2"/><line x1="326.5" y1="433" x2="326.5" y2="449" stroke="#f6dfd3" stroke-dasharray="3.2 3.16" stroke-dashoffset="0.2"/><line x1="337.5" y1="433" x2="337.5" y2="449" stroke="#f6dfd3" stroke-dasharray="3.2 3.16" stroke-dashoffset="0.2"/><line x1="349.5" y1="433" x2="349.5" y2="449" stroke="#f6dfd3" stroke-dasharray="3.2 3.16" stroke-dashoffset="0.2"/><line x1="360.5" y1="433" x2="360.5" y2="449" stroke="#f6dfd3" stroke-dasharray="3.2 3.16" stroke-dashoffset="0.2"/><line x1="372.5" y1="433" x2="372.5" y2="449" stroke="#f6dfd3" stroke-dasharray="3.2 3.16" stroke-dashoffset="0.2"/><line x1="383.5" y1="433" x2="383.5" y2="449" stroke="#f6dfd3" stroke-dasharray="3.2 3.16" stroke-dashoffset="0.2"/><line x1="394.5" y1="433" x2="394.5" y2="449" stroke="#e6b096" stroke-dasharray="3.2 3.16" stroke-dashoffset="0.2"/><line x1="406.5" y1="433" x2="406.5" y2="449" stroke="#f6dfd3" stroke-dasharray="3.2 3.16" stroke-dashoffset="0.2"/><line x1="417.5" y1="433" x2="417.5" y2="449" stroke="#f6dfd3" stroke-dasharray="3.2 3.16" stroke-dashoffset="0.2"/><line x1="429.5" y1="433" x2="429.5" y2="449" stroke="#f6dfd3" stroke-dasharray="3.2 3.16" stroke-dashoffset="0.2"/><line x1="440.5" y1="433" x2="440.5" y2="449" stroke="#f6dfd3" stroke-dasharray="3.2 3.16" stroke-dashoffset="0.2"/><line x1="451.5" y1="433" x2="451.5" y2="449" stroke="#f6dfd3" stroke-dasharray="3.2 3.16" stroke-dashoffset="0.2"/><line x1="463.5" y1="433" x2="463.5" y2="449" stroke="#f6dfd3" stroke-dasharray="3.2 3.16" stroke-dashoffset="0.2"/><line x1="474.5" y1="433" x2="474.5" y2="449" stroke="#f6dfd3" stroke-dasharray="3.2 3.16" stroke-dashoffset="0.2"/><line x1="485.5" y1="433" x2="485.5" y2="449" stroke="#e6b096" stroke-dasharray="3.2 3.16" stroke-dashoffset="0.2"/><line x1="497.5" y1="433" x2="497.5" y2="449" stroke="#f6dfd3" stroke-dasharray="3.2 3.16" stroke-dashoffset="0.2"/><line x1="508.5" y1="433" x2="508.5" y2="449" stroke="#f6dfd3" stroke-dasharray="3.2 3.16" stroke-dashoffset="0.2"/><line x1="520.5" y1="433" x2="520.5" y2="449" stroke="#f6dfd3" stroke-dasharray="3.2 3.16" stroke-dashoffset="0.2"/><line x1="531.5" y1="433" x2="531.5" y2="449" stroke="#f6dfd3" stroke-dasharray="3.2 3.16" stroke-dashoffset="0.2"/><line x1="542.5" y1="433" x2="542.5" y2="449" stroke="#f6dfd3" stroke-dasharray="3.2 3.16" stroke-dashoffset="0.2"/><line x1="554.5" y1="433" x2="554.5" y2="449" stroke="#f6dfd3" stroke-dasharray="3.2 3.16" stroke-dashoffset="0.2"/><line x1="565.5" y1="433" x2="565.5" y2="449" stroke="#f6dfd3" stroke-dasharray="3.2 3.16" stroke-dashoffset="0.2"/><line x1="577.5" y1="433" x2="577.5" y2="449" stroke="#e6b096" stroke-dasharray="3.2 3.16" stroke-dashoffset="0.2"/><line x1="588.5" y1="433" x2="588.5" y2="449" stroke="#f6dfd3" stroke-dasharray="3.2 3.16" stroke-dashoffset="0.2"/><line x1="599.5" y1="433" x2="599.5" y2="449" stroke="#f6dfd3" stroke-dasharray="3.2 3.16" stroke-dashoffset="0.2"/><line x1="611.5" y1="433" x2="611.5" y2="449" stroke="#f6dfd3" stroke-dasharray="3.2 3.16" stroke-dashoffset="0.2"/><line x1="622.5" y1="433" x2="622.5" y2="449" stroke="#f6dfd3" stroke-dasharray="3.2 3.16" stroke-dashoffset="0.2"/><line x1="634.5" y1="433" x2="634.5" y2="449" stroke="#f6dfd3" stroke-dasharray="3.2 3.16" stroke-dashoffset="0.2"/><line x1="30" y1="444.5" x2="640" y2="444.5" stroke="#f6dfd3" stroke-dasharray="3.2 3.16" stroke-dashoffset="0.5"/></svg>
<div style="position:absolute;left:30px;top:414px;width:610px;height:2px;background:#80838e;"></div>
<div style="position:absolute;left:30px;top:416px;width:610px;height:17px;background:#f6f7fc;"></div>
<div style="position:absolute;left:30px;top:433px;width:610px;height:1px;background:#b9bbc2;"></div>
<div style="position:absolute;left:35px;top:419px;width:7px;height:7px;border:1px solid #3c3c3c;border-radius:1.5px;"></div>
<div style="position:absolute;left:37px;top:423px;width:5px;height:1px;background:#3c3c3c;"></div>
<svg style="position:absolute;left:54px;top:421px" width="8" height="8"><path d="M7 0 L7 7 L0 7 Z" fill="#3c3c3c"/></svg>
<div style="position:absolute;left:72px;top:419px;font:bold 11px 'Liberation Sans', sans-serif;color:#3a3a3a;line-height:1;white-space:pre;letter-spacing:-0.12px;">Footer</div>
<div style="position:absolute;left:29px;top:98px;width:190px;height:22px;border:1px solid #cfdbe8;"></div>
<div style="position:absolute;left:28px;top:97px;width:194px;height:26px;overflow:hidden;"><div style="position:absolute;left:2px;top:13px;white-space:pre;font:11.5px 'Liberation Sans', sans-serif;letter-spacing:0.7px;color:#3a7cc6;line-height:1">CategoryID</div></div>
<div style="position:absolute;left:28px;top:97px;width:9px;height:2px;background:#3365a2;"></div>
<div style="position:absolute;left:28px;top:97px;width:2px;height:8px;background:#3365a2;"></div>
<div style="position:absolute;left:28px;top:121px;width:9px;height:2px;background:#3365a2;"></div>
<div style="position:absolute;left:28px;top:115px;width:2px;height:8px;background:#3365a2;"></div>
<div style="position:absolute;left:213px;top:97px;width:9px;height:2px;background:#3365a2;"></div>
<div style="position:absolute;left:220px;top:97px;width:2px;height:8px;background:#3365a2;"></div>
<div style="position:absolute;left:213px;top:121px;width:9px;height:2px;background:#3365a2;"></div>
<div style="position:absolute;left:220px;top:115px;width:2px;height:8px;background:#3365a2;"></div>
<div style="position:absolute;left:219px;top:98px;width:403px;height:22px;border:1px solid #cfdbe8;"></div>
<div style="position:absolute;left:218px;top:97px;width:407px;height:26px;overflow:hidden;"><div style="position:absolute;left:3px;top:13px;white-space:pre;font:11.5px 'Liberation Sans', sans-serif;letter-spacing:0.7px;color:#3a7cc6;line-height:1">CategoryID</div></div>
<svg style="position:absolute;left:612px;top:101px" width="10" height="11" viewBox="0 0 10 11"><path d="M3 0.6 L6 0.6 L8.4 2.6 L8.4 7.4 L6 9.4 L3 9.4 L0.6 7.4 L0.6 2.6 Z" fill="#faf5a6" stroke="#505050" stroke-width="1.15"/><path d="M2.2 2.6 Q4.5 4.4 6.8 2.6" fill="none" stroke="#505050" stroke-width="1"/></svg>
<div style="position:absolute;left:218px;top:97px;width:9px;height:2px;background:#3365a2;"></div>
<div style="position:absolute;left:218px;top:97px;width:2px;height:8px;background:#3365a2;"></div>
<div style="position:absolute;left:218px;top:121px;width:9px;height:2px;background:#3365a2;"></div>
<div style="position:absolute;left:218px;top:115px;width:2px;height:8px;background:#3365a2;"></div>
<div style="position:absolute;left:616px;top:97px;width:9px;height:2px;background:#3365a2;"></div>
<div style="position:absolute;left:623px;top:97px;width:2px;height:8px;background:#3365a2;"></div>
<div style="position:absolute;left:616px;top:121px;width:9px;height:2px;background:#3365a2;"></div>
<div style="position:absolute;left:623px;top:115px;width:2px;height:8px;background:#3365a2;"></div>
<div style="position:absolute;left:29px;top:130px;width:80px;height:21px;border:1px solid #cfdbe8;"></div>
<div style="position:absolute;left:28px;top:129px;width:84px;height:25px;overflow:hidden;"><div style="position:absolute;left:3px;top:12px;white-space:pre;font:11.5px 'Liberation Sans', sans-serif;letter-spacing:0.45px;color:#3a7cc6;line-height:1">Discontinued</div></div>
<div style="position:absolute;left:28px;top:129px;width:9px;height:2px;background:#3365a2;"></div>
<div style="position:absolute;left:28px;top:129px;width:2px;height:8px;background:#3365a2;"></div>
<div style="position:absolute;left:28px;top:152px;width:9px;height:2px;background:#3365a2;"></div>
<div style="position:absolute;left:28px;top:146px;width:2px;height:8px;background:#3365a2;"></div>
<div style="position:absolute;left:103px;top:129px;width:9px;height:2px;background:#3365a2;"></div>
<div style="position:absolute;left:110px;top:129px;width:2px;height:8px;background:#3365a2;"></div>
<div style="position:absolute;left:103px;top:152px;width:9px;height:2px;background:#3365a2;"></div>
<div style="position:absolute;left:110px;top:146px;width:2px;height:8px;background:#3365a2;"></div>
<div style="position:absolute;left:121px;top:130px;width:64px;height:21px;border:1px solid #cfdbe8;"></div>
<div style="position:absolute;left:120px;top:129px;width:68px;height:25px;overflow:hidden;"><div style="position:absolute;left:2px;top:12px;white-space:pre;font:11.5px 'Liberation Sans', sans-serif;letter-spacing:0.45px;color:#3a7cc6;line-height:1">ProductID</div></div>
<div style="position:absolute;left:120px;top:129px;width:9px;height:2px;background:#3365a2;"></div>
<div style="position:absolute;left:120px;top:129px;width:2px;height:8px;background:#3365a2;"></div>
<div style="position:absolute;left:120px;top:152px;width:9px;height:2px;background:#3365a2;"></div>
<div style="position:absolute;left:120px;top:146px;width:2px;height:8px;background:#3365a2;"></div>
<div style="position:absolute;left:179px;top:129px;width:9px;height:2px;background:#3365a2;"></div>
<div style="position:absolute;left:186px;top:129px;width:2px;height:8px;background:#3365a2;"></div>
<div style="position:absolute;left:179px;top:152px;width:9px;height:2px;background:#3365a2;"></div>
<div style="position:absolute;left:186px;top:146px;width:2px;height:8px;background:#3365a2;"></div>
<div style="position:absolute;left:199px;top:130px;width:78px;height:21px;border:1px solid #cfdbe8;"></div>
<div style="position:absolute;left:198px;top:129px;width:82px;height:25px;overflow:hidden;"><div style="position:absolute;left:2px;top:12px;white-space:pre;font:11.5px 'Liberation Sans', sans-serif;letter-spacing:0.45px;color:#3a7cc6;line-height:1">ProductName</div></div>
<div style="position:absolute;left:198px;top:129px;width:9px;height:2px;background:#3365a2;"></div>
<div style="position:absolute;left:198px;top:129px;width:2px;height:8px;background:#3365a2;"></div>
<div style="position:absolute;left:198px;top:152px;width:9px;height:2px;background:#3365a2;"></div>
<div style="position:absolute;left:198px;top:146px;width:2px;height:8px;background:#3365a2;"></div>
<div style="position:absolute;left:271px;top:129px;width:9px;height:2px;background:#3365a2;"></div>
<div style="position:absolute;left:278px;top:129px;width:2px;height:8px;background:#3365a2;"></div>
<div style="position:absolute;left:271px;top:152px;width:9px;height:2px;background:#3365a2;"></div>
<div style="position:absolute;left:278px;top:146px;width:2px;height:8px;background:#3365a2;"></div>
<div style="position:absolute;left:289px;top:130px;width:90px;height:21px;border:1px solid #cfdbe8;"></div>
<div style="position:absolute;left:288px;top:129px;width:94px;height:25px;overflow:hidden;"><div style="position:absolute;left:2px;top:12px;white-space:pre;font:11.5px 'Liberation Sans', sans-serif;letter-spacing:0.45px;color:#3a7cc6;line-height:1">QuantityPerUnit</div></div>
<div style="position:absolute;left:288px;top:129px;width:9px;height:2px;background:#3365a2;"></div>
<div style="position:absolute;left:288px;top:129px;width:2px;height:8px;background:#3365a2;"></div>
<div style="position:absolute;left:288px;top:152px;width:9px;height:2px;background:#3365a2;"></div>
<div style="position:absolute;left:288px;top:146px;width:2px;height:8px;background:#3365a2;"></div>
<div style="position:absolute;left:373px;top:129px;width:9px;height:2px;background:#3365a2;"></div>
<div style="position:absolute;left:380px;top:129px;width:2px;height:8px;background:#3365a2;"></div>
<div style="position:absolute;left:373px;top:152px;width:9px;height:2px;background:#3365a2;"></div>
<div style="position:absolute;left:380px;top:146px;width:2px;height:8px;background:#3365a2;"></div>
<div style="position:absolute;left:390px;top:130px;width:76px;height:21px;border:1px solid #cfdbe8;"></div>
<div style="position:absolute;left:389px;top:129px;width:80px;height:25px;overflow:hidden;"><div style="position:absolute;left:2px;top:12px;white-space:pre;font:11.5px 'Liberation Sans', sans-serif;letter-spacing:0.45px;color:#3a7cc6;line-height:1">ReorderLevel</div></div>
<div style="position:absolute;left:389px;top:129px;width:9px;height:2px;background:#3365a2;"></div>
<div style="position:absolute;left:389px;top:129px;width:2px;height:8px;background:#3365a2;"></div>
<div style="position:absolute;left:389px;top:152px;width:9px;height:2px;background:#3365a2;"></div>
<div style="position:absolute;left:389px;top:146px;width:2px;height:8px;background:#3365a2;"></div>
<div style="position:absolute;left:460px;top:129px;width:9px;height:2px;background:#3365a2;"></div>
<div style="position:absolute;left:467px;top:129px;width:2px;height:8px;background:#3365a2;"></div>
<div style="position:absolute;left:460px;top:152px;width:9px;height:2px;background:#3365a2;"></div>
<div style="position:absolute;left:467px;top:146px;width:2px;height:8px;background:#3365a2;"></div>
<div style="position:absolute;left:478px;top:130px;width:66px;height:21px;border:1px solid #cfdbe8;"></div>
<div style="position:absolute;left:477px;top:129px;width:70px;height:25px;overflow:hidden;"><div style="position:absolute;left:2px;top:12px;white-space:pre;font:11.5px 'Liberation Sans', sans-serif;letter-spacing:0.45px;color:#3a7cc6;line-height:1">SupplierID</div></div>
<div style="position:absolute;left:477px;top:129px;width:9px;height:2px;background:#3365a2;"></div>
<div style="position:absolute;left:477px;top:129px;width:2px;height:8px;background:#3365a2;"></div>
<div style="position:absolute;left:477px;top:152px;width:9px;height:2px;background:#3365a2;"></div>
<div style="position:absolute;left:477px;top:146px;width:2px;height:8px;background:#3365a2;"></div>
<div style="position:absolute;left:538px;top:129px;width:9px;height:2px;background:#3365a2;"></div>
<div style="position:absolute;left:545px;top:129px;width:2px;height:8px;background:#3365a2;"></div>
<div style="position:absolute;left:538px;top:152px;width:9px;height:2px;background:#3365a2;"></div>
<div style="position:absolute;left:545px;top:146px;width:2px;height:8px;background:#3365a2;"></div>
<div style="position:absolute;left:555px;top:130px;width:67px;height:21px;border:1px solid #cfdbe8;"></div>
<div style="position:absolute;left:554px;top:129px;width:71px;height:25px;overflow:hidden;"><div style="position:absolute;left:3px;top:12px;white-space:pre;font:11.5px 'Liberation Sans', sans-serif;letter-spacing:0.45px;color:#3a7cc6;line-height:1">UnitPrice</div></div>
<div style="position:absolute;left:554px;top:129px;width:9px;height:2px;background:#3365a2;"></div>
<div style="position:absolute;left:554px;top:129px;width:2px;height:8px;background:#3365a2;"></div>
<div style="position:absolute;left:554px;top:152px;width:9px;height:2px;background:#3365a2;"></div>
<div style="position:absolute;left:554px;top:146px;width:2px;height:8px;background:#3365a2;"></div>
<div style="position:absolute;left:616px;top:129px;width:9px;height:2px;background:#3365a2;"></div>
<div style="position:absolute;left:623px;top:129px;width:2px;height:8px;background:#3365a2;"></div>
<div style="position:absolute;left:616px;top:152px;width:9px;height:2px;background:#3365a2;"></div>
<div style="position:absolute;left:623px;top:146px;width:2px;height:8px;background:#3365a2;"></div>
<div style="position:absolute;left:633px;top:130px;width:84px;height:21px;border:1px solid #cfdbe8;"></div>
<div style="position:absolute;left:632px;top:129px;width:88px;height:25px;overflow:hidden;"><div style="position:absolute;left:2px;top:12px;white-space:pre;font:11.5px 'Liberation Sans', sans-serif;letter-spacing:0.45px;color:#3a7cc6;line-height:1">UnitsInStock</div></div>
<div style="position:absolute;left:632px;top:129px;width:9px;height:2px;background:#3365a2;"></div>
<div style="position:absolute;left:632px;top:129px;width:2px;height:8px;background:#3365a2;"></div>
<div style="position:absolute;left:632px;top:152px;width:9px;height:2px;background:#3365a2;"></div>
<div style="position:absolute;left:632px;top:146px;width:2px;height:8px;background:#3365a2;"></div>
<div style="position:absolute;left:711px;top:129px;width:9px;height:2px;background:#3365a2;"></div>
<div style="position:absolute;left:718px;top:129px;width:2px;height:8px;background:#3365a2;"></div>
<div style="position:absolute;left:711px;top:152px;width:9px;height:2px;background:#3365a2;"></div>
<div style="position:absolute;left:718px;top:146px;width:2px;height:8px;background:#3365a2;"></div>
<div style="position:absolute;left:0;top:0;width:673px;height:480px;clip-path:inset(201px 0px 237px 0px);">
<div style="position:absolute;left:29px;top:206px;width:80px;height:17px;border:1px solid #cfdbe8;"></div>
<div style="position:absolute;left:28px;top:205px;width:84px;height:21px;overflow:hidden;"><div style="position:absolute;left:6px;top:6px;white-space:pre;font:11.5px 'Liberation Sans', sans-serif;letter-spacing:0.45px;color:#111;line-height:1">Discontinued</div></div>
<svg style="position:absolute;left:100px;top:210px" width="10" height="11" viewBox="0 0 10 11"><path d="M3 0.6 L6 0.6 L8.4 2.6 L8.4 7.4 L6 9.4 L3 9.4 L0.6 7.4 L0.6 2.6 Z" fill="#faf5a6" stroke="#505050" stroke-width="1.15"/><path d="M2.2 2.6 Q4.5 4.4 6.8 2.6" fill="none" stroke="#505050" stroke-width="1"/></svg>
<div style="position:absolute;left:28px;top:205px;width:9px;height:2px;background:#3365a2;"></div>
<div style="position:absolute;left:28px;top:205px;width:2px;height:8px;background:#3365a2;"></div>
<div style="position:absolute;left:28px;top:224px;width:9px;height:2px;background:#3365a2;"></div>
<div style="position:absolute;left:28px;top:218px;width:2px;height:8px;background:#3365a2;"></div>
<div style="position:absolute;left:103px;top:205px;width:9px;height:2px;background:#3365a2;"></div>
<div style="position:absolute;left:110px;top:205px;width:2px;height:8px;background:#3365a2;"></div>
<div style="position:absolute;left:103px;top:224px;width:9px;height:2px;background:#3365a2;"></div>
<div style="position:absolute;left:110px;top:218px;width:2px;height:8px;background:#3365a2;"></div>
<div style="position:absolute;left:124px;top:206px;width:61px;height:17px;border:1px solid #cfdbe8;"></div>
<div style="position:absolute;left:123px;top:205px;width:65px;height:21px;overflow:hidden;"><div style="position:absolute;left:5px;top:6px;white-space:pre;font:11.5px 'Liberation Sans', sans-serif;letter-spacing:0.45px;color:#111;line-height:1">ProductID</div></div>
<svg style="position:absolute;left:175px;top:209px" width="10" height="11" viewBox="0 0 10 11"><path d="M3 0.6 L6 0.6 L8.4 2.6 L8.4 7.4 L6 9.4 L3 9.4 L0.6 7.4 L0.6 2.6 Z" fill="#faf5a6" stroke="#505050" stroke-width="1.15"/><path d="M2.2 2.6 Q4.5 4.4 6.8 2.6" fill="none" stroke="#505050" stroke-width="1"/></svg>
<div style="position:absolute;left:123px;top:205px;width:9px;height:2px;background:#3365a2;"></div>
<div style="position:absolute;left:123px;top:205px;width:2px;height:8px;background:#3365a2;"></div>
<div style="position:absolute;left:123px;top:224px;width:9px;height:2px;background:#3365a2;"></div>
<div style="position:absolute;left:123px;top:218px;width:2px;height:8px;background:#3365a2;"></div>
<div style="position:absolute;left:179px;top:205px;width:9px;height:2px;background:#3365a2;"></div>
<div style="position:absolute;left:186px;top:205px;width:2px;height:8px;background:#3365a2;"></div>
<div style="position:absolute;left:179px;top:224px;width:9px;height:2px;background:#3365a2;"></div>
<div style="position:absolute;left:186px;top:218px;width:2px;height:8px;background:#3365a2;"></div>
<div style="position:absolute;left:199px;top:206px;width:78px;height:17px;border:1px solid #cfdbe8;"></div>
<div style="position:absolute;left:198px;top:205px;width:82px;height:21px;overflow:hidden;"><div style="position:absolute;left:2px;top:4px;white-space:pre;font:11.5px 'Liberation Sans', sans-serif;letter-spacing:0.45px;color:#111;line-height:1">ProductName</div></div>
<svg style="position:absolute;left:268px;top:210px" width="10" height="11" viewBox="0 0 10 11"><path d="M3 0.6 L6 0.6 L8.4 2.6 L8.4 7.4 L6 9.4 L3 9.4 L0.6 7.4 L0.6 2.6 Z" fill="#faf5a6" stroke="#505050" stroke-width="1.15"/><path d="M2.2 2.6 Q4.5 4.4 6.8 2.6" fill="none" stroke="#505050" stroke-width="1"/></svg>
<div style="position:absolute;left:198px;top:205px;width:9px;height:2px;background:#3365a2;"></div>
<div style="position:absolute;left:198px;top:205px;width:2px;height:8px;background:#3365a2;"></div>
<div style="position:absolute;left:198px;top:224px;width:9px;height:2px;background:#3365a2;"></div>
<div style="position:absolute;left:198px;top:218px;width:2px;height:8px;background:#3365a2;"></div>
<div style="position:absolute;left:271px;top:205px;width:9px;height:2px;background:#3365a2;"></div>
<div style="position:absolute;left:278px;top:205px;width:2px;height:8px;background:#3365a2;"></div>
<div style="position:absolute;left:271px;top:224px;width:9px;height:2px;background:#3365a2;"></div>
<div style="position:absolute;left:278px;top:218px;width:2px;height:8px;background:#3365a2;"></div>
<div style="position:absolute;left:286px;top:206px;width:93px;height:17px;border:1px solid #cfdbe8;"></div>
<div style="position:absolute;left:285px;top:205px;width:97px;height:21px;overflow:hidden;"><div style="position:absolute;left:4px;top:6px;white-space:pre;font:11.5px 'Liberation Sans', sans-serif;letter-spacing:0.45px;color:#111;line-height:1">QuantityPerUnit</div></div>
<svg style="position:absolute;left:370px;top:209px" width="10" height="11" viewBox="0 0 10 11"><path d="M3 0.6 L6 0.6 L8.4 2.6 L8.4 7.4 L6 9.4 L3 9.4 L0.6 7.4 L0.6 2.6 Z" fill="#faf5a6" stroke="#505050" stroke-width="1.15"/><path d="M2.2 2.6 Q4.5 4.4 6.8 2.6" fill="none" stroke="#505050" stroke-width="1"/></svg>
<div style="position:absolute;left:285px;top:205px;width:9px;height:2px;background:#3365a2;"></div>
<div style="position:absolute;left:285px;top:205px;width:2px;height:8px;background:#3365a2;"></div>
<div style="position:absolute;left:285px;top:224px;width:9px;height:2px;background:#3365a2;"></div>
<div style="position:absolute;left:285px;top:218px;width:2px;height:8px;background:#3365a2;"></div>
<div style="position:absolute;left:373px;top:205px;width:9px;height:2px;background:#3365a2;"></div>
<div style="position:absolute;left:380px;top:205px;width:2px;height:8px;background:#3365a2;"></div>
<div style="position:absolute;left:373px;top:224px;width:9px;height:2px;background:#3365a2;"></div>
<div style="position:absolute;left:380px;top:218px;width:2px;height:8px;background:#3365a2;"></div>
<div style="position:absolute;left:390px;top:206px;width:76px;height:17px;border:1px solid #cfdbe8;"></div>
<div style="position:absolute;left:389px;top:205px;width:80px;height:21px;overflow:hidden;"><div style="position:absolute;left:4px;top:6px;white-space:pre;font:11.5px 'Liberation Sans', sans-serif;letter-spacing:0.45px;color:#111;line-height:1">ReorderLevel</div></div>
<svg style="position:absolute;left:456px;top:209px" width="10" height="11" viewBox="0 0 10 11"><path d="M3 0.6 L6 0.6 L8.4 2.6 L8.4 7.4 L6 9.4 L3 9.4 L0.6 7.4 L0.6 2.6 Z" fill="#faf5a6" stroke="#505050" stroke-width="1.15"/><path d="M2.2 2.6 Q4.5 4.4 6.8 2.6" fill="none" stroke="#505050" stroke-width="1"/></svg>
<div style="position:absolute;left:389px;top:205px;width:9px;height:2px;background:#3365a2;"></div>
<div style="position:absolute;left:389px;top:205px;width:2px;height:8px;background:#3365a2;"></div>
<div style="position:absolute;left:389px;top:224px;width:9px;height:2px;background:#3365a2;"></div>
<div style="position:absolute;left:389px;top:218px;width:2px;height:8px;background:#3365a2;"></div>
<div style="position:absolute;left:460px;top:205px;width:9px;height:2px;background:#3365a2;"></div>
<div style="position:absolute;left:467px;top:205px;width:2px;height:8px;background:#3365a2;"></div>
<div style="position:absolute;left:460px;top:224px;width:9px;height:2px;background:#3365a2;"></div>
<div style="position:absolute;left:467px;top:218px;width:2px;height:8px;background:#3365a2;"></div>
<div style="position:absolute;left:478px;top:206px;width:66px;height:17px;border:1px solid #cfdbe8;"></div>
<div style="position:absolute;left:477px;top:205px;width:70px;height:21px;overflow:hidden;"><div style="position:absolute;left:4px;top:6px;white-space:pre;font:11.5px 'Liberation Sans', sans-serif;letter-spacing:0.45px;color:#111;line-height:1">SupplierID</div></div>
<svg style="position:absolute;left:534px;top:209px" width="10" height="11" viewBox="0 0 10 11"><path d="M3 0.6 L6 0.6 L8.4 2.6 L8.4 7.4 L6 9.4 L3 9.4 L0.6 7.4 L0.6 2.6 Z" fill="#faf5a6" stroke="#505050" stroke-width="1.15"/><path d="M2.2 2.6 Q4.5 4.4 6.8 2.6" fill="none" stroke="#505050" stroke-width="1"/></svg>
<div style="position:absolute;left:477px;top:205px;width:9px;height:2px;background:#3365a2;"></div>
<div style="position:absolute;left:477px;top:205px;width:2px;height:8px;background:#3365a2;"></div>
<div style="position:absolute;left:477px;top:224px;width:9px;height:2px;background:#3365a2;"></div>
<div style="position:absolute;left:477px;top:218px;width:2px;height:8px;background:#3365a2;"></div>
<div style="position:absolute;left:538px;top:205px;width:9px;height:2px;background:#3365a2;"></div>
<div style="position:absolute;left:545px;top:205px;width:2px;height:8px;background:#3365a2;"></div>
<div style="position:absolute;left:538px;top:224px;width:9px;height:2px;background:#3365a2;"></div>
<div style="position:absolute;left:545px;top:218px;width:2px;height:8px;background:#3365a2;"></div>
<div style="position:absolute;left:555px;top:200px;width:67px;height:23px;border:1px solid #cfdbe8;"></div>
<div style="position:absolute;left:554px;top:199px;width:71px;height:27px;overflow:hidden;"><div style="position:absolute;left:10px;top:9px;white-space:pre;font:11.5px 'Liberation Sans', sans-serif;letter-spacing:0.45px;color:#111;line-height:1">UnitPrice</div></div>
<svg style="position:absolute;left:612px;top:204px" width="10" height="11" viewBox="0 0 10 11"><path d="M3 0.6 L6 0.6 L8.4 2.6 L8.4 7.4 L6 9.4 L3 9.4 L0.6 7.4 L0.6 2.6 Z" fill="#faf5a6" stroke="#505050" stroke-width="1.15"/><path d="M2.2 2.6 Q4.5 4.4 6.8 2.6" fill="none" stroke="#505050" stroke-width="1"/></svg>
<div style="position:absolute;left:554px;top:199px;width:9px;height:2px;background:#3365a2;"></div>
<div style="position:absolute;left:554px;top:199px;width:2px;height:8px;background:#3365a2;"></div>
<div style="position:absolute;left:554px;top:224px;width:9px;height:2px;background:#3365a2;"></div>
<div style="position:absolute;left:554px;top:218px;width:2px;height:8px;background:#3365a2;"></div>
<div style="position:absolute;left:616px;top:199px;width:9px;height:2px;background:#3365a2;"></div>
<div style="position:absolute;left:623px;top:199px;width:2px;height:8px;background:#3365a2;"></div>
<div style="position:absolute;left:616px;top:224px;width:9px;height:2px;background:#3365a2;"></div>
<div style="position:absolute;left:623px;top:218px;width:2px;height:8px;background:#3365a2;"></div>
<div style="position:absolute;left:633px;top:206px;width:84px;height:23px;border:1px solid #cfdbe8;"></div>
<div style="position:absolute;left:632px;top:205px;width:88px;height:27px;overflow:hidden;"><div style="position:absolute;left:4px;top:9px;white-space:pre;font:11.5px 'Liberation Sans', sans-serif;letter-spacing:0.45px;color:#111;line-height:1">UnitsInStock</div></div>
<div style="position:absolute;left:632px;top:205px;width:9px;height:2px;background:#3365a2;"></div>
<div style="position:absolute;left:632px;top:205px;width:2px;height:8px;background:#3365a2;"></div>
<div style="position:absolute;left:632px;top:230px;width:9px;height:2px;background:#3365a2;"></div>
<div style="position:absolute;left:632px;top:224px;width:2px;height:8px;background:#3365a2;"></div>
<div style="position:absolute;left:711px;top:205px;width:9px;height:2px;background:#3365a2;"></div>
<div style="position:absolute;left:718px;top:205px;width:2px;height:8px;background:#3365a2;"></div>
<div style="position:absolute;left:711px;top:230px;width:9px;height:2px;background:#3365a2;"></div>
<div style="position:absolute;left:718px;top:224px;width:2px;height:8px;background:#3365a2;"></div>
</div>
<div style="position:absolute;left:32px;top:385px;width:297px;height:19px;border:1px solid #cfdbe8;"></div>
<div style="position:absolute;left:31px;top:384px;width:301px;height:23px;overflow:hidden;"><div style="position:absolute;left:3px;top:3px;white-space:pre;font:11px 'Liberation Sans', sans-serif;letter-spacing:0;color:#111;line-height:1">Now()</div></div>
<svg style="position:absolute;left:319px;top:388px" width="10" height="11" viewBox="0 0 10 11"><path d="M3 0.6 L6 0.6 L8.4 2.6 L8.4 7.4 L6 9.4 L3 9.4 L0.6 7.4 L0.6 2.6 Z" fill="#faf5a6" stroke="#505050" stroke-width="1.15"/><path d="M2.2 2.6 Q4.5 4.4 6.8 2.6" fill="none" stroke="#505050" stroke-width="1"/></svg>
<div style="position:absolute;left:31px;top:384px;width:9px;height:2px;background:#3365a2;"></div>
<div style="position:absolute;left:31px;top:384px;width:2px;height:8px;background:#3365a2;"></div>
<div style="position:absolute;left:31px;top:405px;width:9px;height:2px;background:#3365a2;"></div>
<div style="position:absolute;left:31px;top:399px;width:2px;height:8px;background:#3365a2;"></div>
<div style="position:absolute;left:323px;top:384px;width:9px;height:2px;background:#3365a2;"></div>
<div style="position:absolute;left:330px;top:384px;width:2px;height:8px;background:#3365a2;"></div>
<div style="position:absolute;left:323px;top:405px;width:9px;height:2px;background:#3365a2;"></div>
<div style="position:absolute;left:330px;top:399px;width:2px;height:8px;background:#3365a2;"></div>
<div style="position:absolute;left:326px;top:385px;width:296px;height:19px;border:1px solid #cfdbe8;"></div>
<div style="position:absolute;left:325px;top:384px;width:300px;height:23px;overflow:hidden;"><div style="position:absolute;left:132px;top:3px;white-space:pre;font:11.5px 'Liberation Sans', sans-serif;letter-spacing:0;color:#111;line-height:1">"Page " &amp; [Page] &amp; of  &amp; [Page</div></div>
<svg style="position:absolute;left:612px;top:388px" width="10" height="11" viewBox="0 0 10 11"><path d="M3 0.6 L6 0.6 L8.4 2.6 L8.4 7.4 L6 9.4 L3 9.4 L0.6 7.4 L0.6 2.6 Z" fill="#faf5a6" stroke="#505050" stroke-width="1.15"/><path d="M2.2 2.6 Q4.5 4.4 6.8 2.6" fill="none" stroke="#505050" stroke-width="1"/></svg>
<div style="position:absolute;left:325px;top:384px;width:9px;height:2px;background:#3365a2;"></div>
<div style="position:absolute;left:325px;top:384px;width:2px;height:8px;background:#3365a2;"></div>
<div style="position:absolute;left:325px;top:405px;width:9px;height:2px;background:#3365a2;"></div>
<div style="position:absolute;left:325px;top:399px;width:2px;height:8px;background:#3365a2;"></div>
<div style="position:absolute;left:616px;top:384px;width:9px;height:2px;background:#3365a2;"></div>
<div style="position:absolute;left:623px;top:384px;width:2px;height:8px;background:#3365a2;"></div>
<div style="position:absolute;left:616px;top:405px;width:9px;height:2px;background:#3365a2;"></div>
<div style="position:absolute;left:623px;top:399px;width:2px;height:8px;background:#3365a2;"></div>
<div style="position:absolute;left:30px;top:79px;width:1px;height:370px;background:#c6c6ca;"></div>
<div style="position:absolute;left:639px;top:79px;width:1px;height:370px;background:#c4c4c8;"></div>
</div>
<div style="position:absolute;left:644px;top:30px;width:1px;height:420px;background:#ffffff;"></div>
<div style="position:absolute;left:645px;top:30px;width:14px;height:420px;background:#ededf2;"></div>
<div style="position:absolute;left:645px;top:30px;width:12px;height:14px;border:1px solid #c8cbd9;background:#eeeef3;"></div>
<svg style="position:absolute;left:645px;top:30px" width="14" height="16"><path d="M2.8 10 L6.5 5.6 L10.2 10" fill="none" stroke="#1a1a1a" stroke-width="2.3"/></svg>
<div style="position:absolute;left:645px;top:66px;width:12px;height:107px;border:1px solid #c8cbd9;background:#ededf2;"></div>
<div style="position:absolute;left:647px;top:121.2px;width:9px;height:1.5px;background:#1e1e1e;border-radius:1px;"></div>
<div style="position:absolute;left:647px;top:125.2px;width:9px;height:1.5px;background:#1e1e1e;border-radius:1px;"></div>
<div style="position:absolute;left:647px;top:129.2px;width:9px;height:1.5px;background:#1e1e1e;border-radius:1px;"></div>
<div style="position:absolute;left:645px;top:434px;width:12px;height:14px;border:1px solid #c8cbd9;background:#eeeef3;"></div>
<svg style="position:absolute;left:645px;top:434px" width="14" height="16"><path d="M3 6.2 L6.5 9.9 L10 6.2" fill="none" stroke="#1a1a1a" stroke-width="2.3"/></svg>
<div style="position:absolute;left:30px;top:454px;width:610px;height:1px;background:#ffffff;"></div>
<div style="position:absolute;left:30px;top:455px;width:610px;height:14px;background:#ededf2;"></div>
<div style="position:absolute;left:30px;top:455px;width:14px;height:12px;border:1px solid #c8cbd9;background:#eeeef3;"></div>
<svg style="position:absolute;left:30px;top:455px" width="16" height="14"><path d="M10 3 L5.6 6.5 L10 10" fill="none" stroke="#1a1a1a" stroke-width="2.3"/></svg>
<div style="position:absolute;left:46px;top:455px;width:142px;height:12px;border:1px solid #c8cbd9;background:#ededf2;"></div>
<div style="position:absolute;left:113.0px;top:457px;width:1.3px;height:9px;background:#1e1e1e;border-radius:0.6px;"></div>
<div style="position:absolute;left:117.0px;top:457px;width:1.3px;height:9px;background:#1e1e1e;border-radius:0.6px;"></div>
<div style="position:absolute;left:121.0px;top:457px;width:1.3px;height:9px;background:#1e1e1e;border-radius:0.6px;"></div>
<div style="position:absolute;left:624px;top:455px;width:14px;height:12px;border:1px solid #c8cbd9;background:#eeeef3;"></div>
<svg style="position:absolute;left:624px;top:455px" width="16" height="14"><path d="M5.5 3 L10.4 6.6 L5.5 10.2" fill="none" stroke="#1a1a1a" stroke-width="2.3"/></svg>
<div style="position:absolute;left:74px;top:61px;width:595px;height:20px;border:1px solid #767676;background:#fff;"></div>
<div style="position:absolute;left:78px;top:67px;font:11.8px 'Liberation Sans', sans-serif;color:#505050;line-height:1;white-space:pre;letter-spacing:0px;">Page header section: appears at the top of every page, subject to the setting of the Layout.PageHeader property.</div>
<svg style="position:absolute;left:74px;top:41px" width="14" height="22"><path d="M0.5 0.5 L0.5 16.5 L4.5 12.5 L7.5 18.5 L9.5 17.5 L6.5 11.5 L11.5 11.5 Z" fill="#fff" stroke="#000" stroke-width="1"/></svg>
</body></html>
